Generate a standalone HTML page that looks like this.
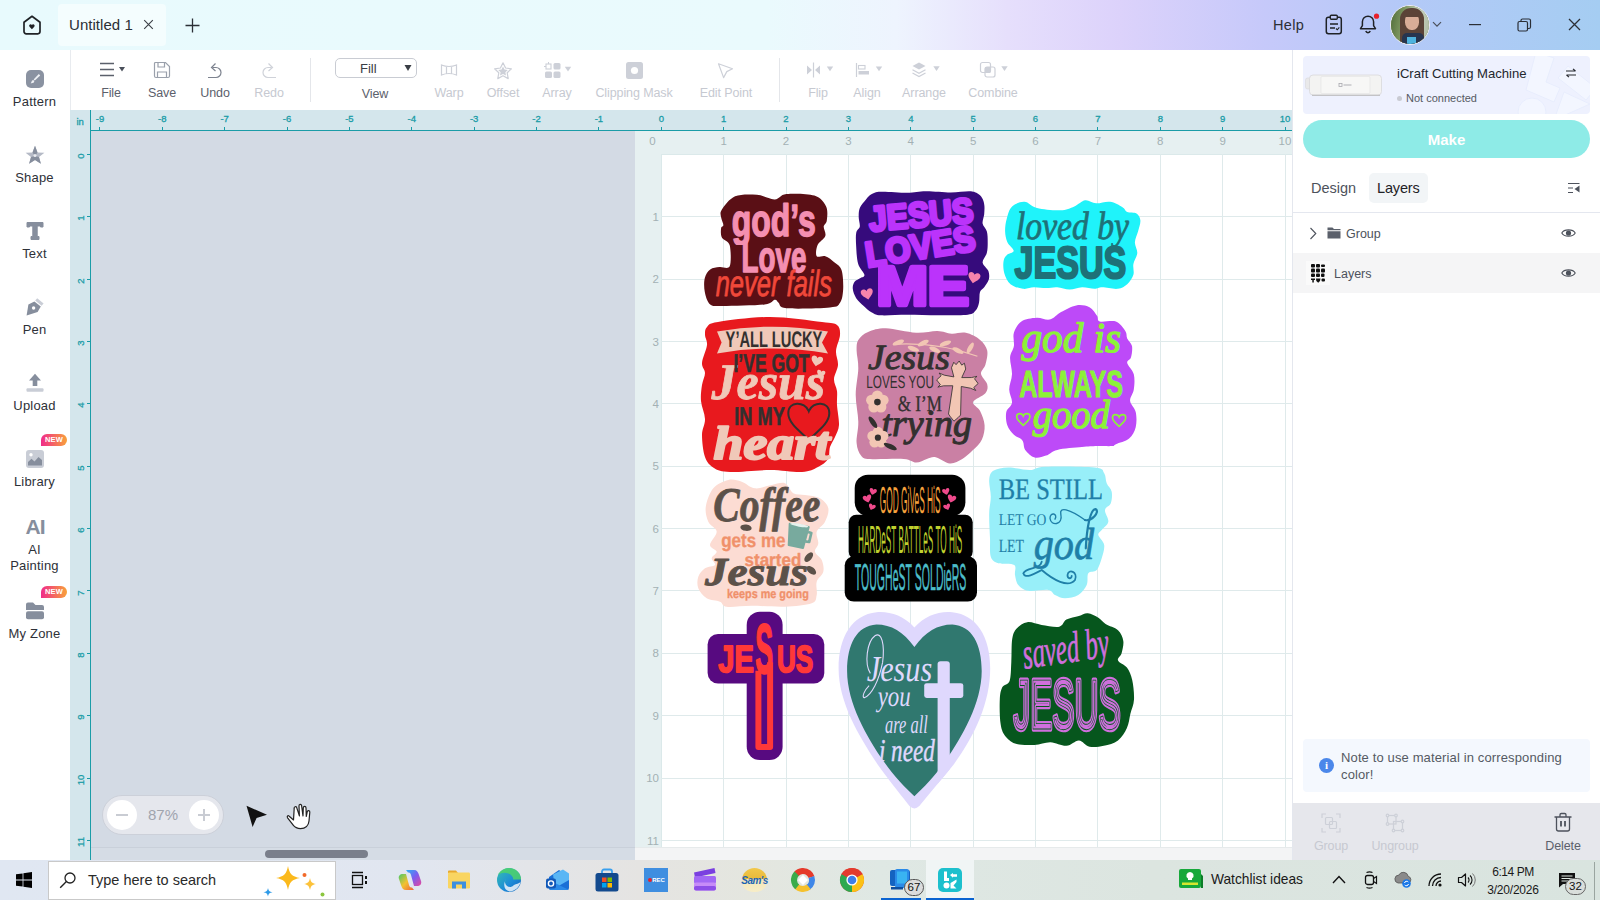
<!DOCTYPE html>
<html lang="en">
<head>
<meta charset="utf-8">
<title>Untitled 1</title>
<style>
*{box-sizing:border-box;margin:0;padding:0}
html,body{width:1600px;height:900px;overflow:hidden;background:#fff;font-family:"Liberation Sans",sans-serif;color:#333}
.abs{position:absolute}
#titlebar{position:absolute;left:0;top:0;width:1600px;height:50px;background:linear-gradient(90deg,#e8fafd 0%,#eafafd 48%,#eef4fe 56%,#e6dffc 63%,#dcd2fb 70%,#c6c9fa 79%,#b3c9f7 88%,#a5cdf2 100%)}
#tab{position:absolute;left:58px;top:4px;width:108px;height:42px;background:#f4fdfe;border-radius:4px}
#tabtxt{position:absolute;left:69px;top:16px;font-size:15px;color:#2b2f36;letter-spacing:.05px;white-space:nowrap}
#sidebar{position:absolute;left:0;top:50px;width:70px;height:810px;background:#fff}
.sb{position:absolute;left:0;width:69px;text-align:center;font-size:13px;color:#2e3138;letter-spacing:.2px;line-height:16px}
#toolbar{position:absolute;left:70px;top:50px;width:1222px;height:60px;background:#fff;border-left:1px solid #e8ebef}
.tl{position:absolute;font-size:12.5px;letter-spacing:-.1px;color:#5b606b;white-space:nowrap;transform:translateX(-50%);top:86px;line-height:15px}
.tl.dis{color:#c6c9d1}
.sep{position:absolute;top:58px;width:1px;height:44px;background:#e4e6ea}
#hruler{position:absolute;left:70px;top:110px;width:1222px;height:21px;background:#d4e6ec;border-bottom:1px solid #1a9ca7}
#vruler{position:absolute;left:70px;top:110px;width:21px;height:750px;background:#d4e6ec;border-right:1px solid #1a9ca7}
.rn{position:absolute;font-size:9.5px;-webkit-text-stroke:.3px #1a9ca7;color:#1a9ca7;top:113px;line-height:12px;transform:translateX(-50%);white-space:nowrap}
.rt{position:absolute;top:127px;width:1px;height:3px;background:#1a9ca7}
.vn{position:absolute;font-size:9.5px;-webkit-text-stroke:.3px #1a9ca7;color:#1a9ca7;left:80.5px;line-height:12px;margin-top:1.5px;transform:translate(-50%,-50%) rotate(-90deg);white-space:nowrap}
.vt{position:absolute;left:87px;width:3px;height:1px;background:#1a9ca7}
#gray{position:absolute;left:91px;top:131px;width:544px;height:729px;background:#d3dae4}
#mat{position:absolute;left:635px;top:131px;width:657px;height:729px;background:#e6f0f1}
#matwhite{position:absolute;left:661px;top:154px;width:631px;height:706px;background:#fff;border-left:1px solid #dbe9ea;border-top:1px solid #dbe9ea}
.mn{position:absolute;font-size:11.5px;color:#a3b1b4;line-height:14px;white-space:nowrap}
#right{position:absolute;left:1292px;top:50px;width:308px;height:810px;background:#fff;border-left:1px solid #e4e7ee}
#taskbar{position:absolute;left:0;top:860px;width:1600px;height:40px;background:linear-gradient(90deg,#e0e7f2 0%,#e1e6f0 26%,#e5e4e2 40%,#e4e6df 47%,#dfe8e4 55%,#dce5e0 72%,#d9e4df 100%)}
.new{width:26px;height:12px;border-radius:7px 7px 7px 0;background:linear-gradient(90deg,#f02b8a,#f8a23a);color:#fff;font-size:7.500px;font-weight:bold;line-height:12px;text-align:center;letter-spacing:.2px}
</style>
</head>
<body>
<div id="titlebar"></div>
<div id="tab"></div>
<svg class="abs" style="left:20px;top:13px" width="24" height="24" viewBox="0 0 24 24"><path d="M4 9.2 L12 3.3 L20 9.2 V18.6 a2.2 2.2 0 0 1 -2.2 2.2 H6.2 a2.2 2.2 0 0 1 -2.2 -2.2 Z" fill="none" stroke="#1f2226" stroke-width="1.7" stroke-linejoin="round"/><path d="M11.900 16.200 L9.500 13.700 a1.500 1.500 0 0 1 2.400 -1.800 a1.500 1.500 0 0 1 2.400 1.800 Z" fill="#1f2226"/></svg>
<div id="tabtxt">Untitled 1</div>
<svg class="abs" style="left:143px;top:19px" width="11" height="11" viewBox="0 0 11 11"><path d="M1.2 1.2 L9.8 9.8 M9.8 1.2 L1.2 9.8" stroke="#3a3e45" stroke-width="1.1" fill="none"/></svg>
<svg class="abs" style="left:185px;top:18px" width="15" height="15" viewBox="0 0 15 15"><path d="M7.5 0.5 V14.5 M0.5 7.5 H14.5" stroke="#2b2f36" stroke-width="1.3" fill="none"/></svg>
<div class="abs" style="left:1273px;top:17px;font-size:14.5px;color:#2b2f36;letter-spacing:.3px">Help</div>
<svg class="abs" style="left:1324px;top:13px" width="20" height="24" viewBox="0 0 20 24"><rect x="2.3" y="4.3" width="15" height="16.4" rx="2.2" fill="none" stroke="#1f2226" stroke-width="1.5"/><rect x="6.3" y="2.3" width="7" height="4" rx="1" fill="#bfc9f9" stroke="#1f2226" stroke-width="1.4"/><path d="M6 11 H14 M6 15 H11" stroke="#1f2226" stroke-width="1.4" fill="none"/><path d="M12 15.5 l1.3 1.3 l2 -2.4" stroke="#1f2226" stroke-width="1.1" fill="none"/></svg>
<svg class="abs" style="left:1356px;top:11px" width="26" height="26" viewBox="0 0 26 26"><path d="M12 5.2 a5.6 5.6 0 0 1 5.6 5.6 v3.8 l1.9 3.1 H4.5 l1.9 -3.1 v-3.8 a5.600 5.600 0 0 1 5.6 -5.6 Z" fill="none" stroke="#1f2226" stroke-width="1.5" stroke-linejoin="round"/><path d="M9.8 20 a2.300 2.300 0 0 0 4.400 0" fill="none" stroke="#1f2226" stroke-width="1.5"/><circle cx="20.500" cy="5.200" r="2.600" fill="#e8202a"/></svg>
<div class="abs" style="left:1390px;top:5px;width:40px;height:40px;border-radius:50%;overflow:hidden;background:#6f8a55;border:1px solid #f1eefb">
 <div class="abs" style="left:0;top:0;width:40px;height:40px;background:linear-gradient(100deg,#4f6b38 0,#7d9660 30%,#c9d3c0 60%,#a9b59c 100%)"></div>
 <div class="abs" style="left:9px;top:2px;width:24px;height:40px;border-radius:11px 11px 4px 4px;background:#5b4337"></div>
 <div class="abs" style="left:14px;top:7px;width:14px;height:17px;border-radius:45%;background:#d8ad97"></div>
 <div class="abs" style="left:12px;top:4px;width:18px;height:7px;border-radius:9px 9px 0 0;background:#5b4337"></div>
 <div class="abs" style="left:11px;top:27px;width:22px;height:13px;border-radius:5px 5px 0 0;background:#27354f"></div>
 <div class="abs" style="left:16px;top:31px;width:9px;height:7px;background:#4fb3de"></div>
</div>
<svg class="abs" style="left:1432px;top:21px" width="10" height="7" viewBox="0 0 10 7"><path d="M1 1.200 L5 5.200 L9 1.200" stroke="#4a4f5a" stroke-width="1.200" fill="none"/></svg>
<svg class="abs" style="left:1468px;top:20px" width="14" height="10" viewBox="0 0 14 10"><path d="M1 4.600 H13" stroke="#2b2f36" stroke-width="1.200"/></svg>
<svg class="abs" style="left:1517px;top:18px" width="15" height="14" viewBox="0 0 15 14"><rect x="1" y="3.500" width="9.500" height="9.500" rx="1.500" fill="none" stroke="#2b2f36" stroke-width="1.200"/><path d="M4 3.500 V2.500 a1.500 1.500 0 0 1 1.500 -1.500 H12 a1.500 1.500 0 0 1 1.500 1.500 V9 a1.500 1.500 0 0 1 -1.500 1.500 H10.500" fill="none" stroke="#2b2f36" stroke-width="1.200"/></svg>
<svg class="abs" style="left:1568px;top:18px" width="13" height="13" viewBox="0 0 13 13"><path d="M1 1 L12 12 M12 1 L1 12" stroke="#2b2f36" stroke-width="1.300" fill="none"/></svg>
<div id="gray"></div><div id="mat"></div><div id="matwhite"></div>
<svg class="abs" style="left:635px;top:131px" width="657" height="729" viewBox="635 131 657 729"><line x1="723.5" y1="154" x2="723.5" y2="860" stroke="#dfeaeb" stroke-width="1"/><line x1="786.5" y1="154" x2="786.5" y2="860" stroke="#dfeaeb" stroke-width="1"/><line x1="848.5" y1="154" x2="848.5" y2="860" stroke="#dfeaeb" stroke-width="1"/><line x1="910.5" y1="154" x2="910.5" y2="860" stroke="#dfeaeb" stroke-width="1"/><line x1="973.5" y1="154" x2="973.5" y2="860" stroke="#dfeaeb" stroke-width="1"/><line x1="1035.5" y1="154" x2="1035.5" y2="860" stroke="#dfeaeb" stroke-width="1"/><line x1="1097.5" y1="154" x2="1097.5" y2="860" stroke="#dfeaeb" stroke-width="1"/><line x1="1160.5" y1="154" x2="1160.5" y2="860" stroke="#dfeaeb" stroke-width="1"/><line x1="1222.5" y1="154" x2="1222.5" y2="860" stroke="#dfeaeb" stroke-width="1"/><line x1="1285.5" y1="154" x2="1285.5" y2="860" stroke="#dfeaeb" stroke-width="1"/><line x1="661" y1="216.5" x2="1292" y2="216.5" stroke="#dfeaeb" stroke-width="1"/><line x1="661" y1="279.5" x2="1292" y2="279.5" stroke="#dfeaeb" stroke-width="1"/><line x1="661" y1="341.5" x2="1292" y2="341.5" stroke="#dfeaeb" stroke-width="1"/><line x1="661" y1="403.5" x2="1292" y2="403.5" stroke="#dfeaeb" stroke-width="1"/><line x1="661" y1="466.5" x2="1292" y2="466.5" stroke="#dfeaeb" stroke-width="1"/><line x1="661" y1="528.5" x2="1292" y2="528.5" stroke="#dfeaeb" stroke-width="1"/><line x1="661" y1="590.5" x2="1292" y2="590.5" stroke="#dfeaeb" stroke-width="1"/><line x1="661" y1="653.5" x2="1292" y2="653.5" stroke="#dfeaeb" stroke-width="1"/><line x1="661" y1="715.5" x2="1292" y2="715.5" stroke="#dfeaeb" stroke-width="1"/><line x1="661" y1="778.5" x2="1292" y2="778.5" stroke="#dfeaeb" stroke-width="1"/><line x1="661" y1="840.5" x2="1292" y2="840.5" stroke="#dfeaeb" stroke-width="1"/></svg>
<div class="mn" style="left:649.3px;top:134px">0</div>
<div class="mn" style="left:723.7px;top:134px;transform:translateX(-50%)">1</div>
<div class="mn" style="left:786.0px;top:134px;transform:translateX(-50%)">2</div>
<div class="mn" style="left:848.4px;top:134px;transform:translateX(-50%)">3</div>
<div class="mn" style="left:910.8px;top:134px;transform:translateX(-50%)">4</div>
<div class="mn" style="left:973.1px;top:134px;transform:translateX(-50%)">5</div>
<div class="mn" style="left:1035.5px;top:134px;transform:translateX(-50%)">6</div>
<div class="mn" style="left:1097.9px;top:134px;transform:translateX(-50%)">7</div>
<div class="mn" style="left:1160.3px;top:134px;transform:translateX(-50%)">8</div>
<div class="mn" style="left:1222.6px;top:134px;transform:translateX(-50%)">9</div>
<div class="mn" style="left:1285.0px;top:134px;transform:translateX(-50%)">10</div>
<div class="mn" style="left:645px;top:209.8px;width:14px;text-align:right">1</div>
<div class="mn" style="left:645px;top:272.1px;width:14px;text-align:right">2</div>
<div class="mn" style="left:645px;top:334.5px;width:14px;text-align:right">3</div>
<div class="mn" style="left:645px;top:396.9px;width:14px;text-align:right">4</div>
<div class="mn" style="left:645px;top:459.2px;width:14px;text-align:right">5</div>
<div class="mn" style="left:645px;top:521.6px;width:14px;text-align:right">6</div>
<div class="mn" style="left:645px;top:584.0px;width:14px;text-align:right">7</div>
<div class="mn" style="left:645px;top:646.4px;width:14px;text-align:right">8</div>
<div class="mn" style="left:645px;top:708.7px;width:14px;text-align:right">9</div>
<div class="mn" style="left:645px;top:771.1px;width:14px;text-align:right">10</div>
<div class="mn" style="left:645px;top:833.5px;width:14px;text-align:right">11</div>
<div id="hruler"></div><div id="vruler"></div>
<div class="abs" style="left:76.5px;top:116px;font-size:9.5px;-webkit-text-stroke:.3px #1a9ca7;color:#1a9ca7;line-height:12px">in</div>
<div class="abs" style="left:90px;top:112px;width:1px;height:20px;background:#1a9ca7"></div>
<div class="rn" style="left:100.0px">-9</div><div class="rt" style="left:99px"></div>
<div class="rn" style="left:162.3px">-8</div><div class="rt" style="left:162px"></div>
<div class="rn" style="left:224.7px">-7</div><div class="rt" style="left:224px"></div>
<div class="rn" style="left:287.1px">-6</div><div class="rt" style="left:287px"></div>
<div class="rn" style="left:349.4px">-5</div><div class="rt" style="left:349px"></div>
<div class="rn" style="left:411.8px">-4</div><div class="rt" style="left:411px"></div>
<div class="rn" style="left:474.2px">-3</div><div class="rt" style="left:474px"></div>
<div class="rn" style="left:536.6px">-2</div><div class="rt" style="left:536px"></div>
<div class="rn" style="left:598.9px">-1</div><div class="rt" style="left:598px"></div>
<div class="rn" style="left:661.3px">0</div><div class="rt" style="left:661px"></div>
<div class="rn" style="left:723.7px">1</div><div class="rt" style="left:723px"></div>
<div class="rn" style="left:786.0px">2</div><div class="rt" style="left:786px"></div>
<div class="rn" style="left:848.4px">3</div><div class="rt" style="left:848px"></div>
<div class="rn" style="left:910.8px">4</div><div class="rt" style="left:910px"></div>
<div class="rn" style="left:973.1px">5</div><div class="rt" style="left:973px"></div>
<div class="rn" style="left:1035.5px">6</div><div class="rt" style="left:1035px"></div>
<div class="rn" style="left:1097.9px">7</div><div class="rt" style="left:1097px"></div>
<div class="rn" style="left:1160.3px">8</div><div class="rt" style="left:1160px"></div>
<div class="rn" style="left:1222.6px">9</div><div class="rt" style="left:1222px"></div>
<div class="rn" style="left:1285.0px">10</div><div class="rt" style="left:1285px"></div>
<div class="vn" style="top:154.4px">0</div><div class="vt" style="top:154px"></div>
<div class="vn" style="top:216.8px">1</div><div class="vt" style="top:216px"></div>
<div class="vn" style="top:279.1px">2</div><div class="vt" style="top:279px"></div>
<div class="vn" style="top:341.5px">3</div><div class="vt" style="top:341px"></div>
<div class="vn" style="top:403.9px">4</div><div class="vt" style="top:403px"></div>
<div class="vn" style="top:466.2px">5</div><div class="vt" style="top:466px"></div>
<div class="vn" style="top:528.6px">6</div><div class="vt" style="top:528px"></div>
<div class="vn" style="top:591.0px">7</div><div class="vt" style="top:590px"></div>
<div class="vn" style="top:653.4px">8</div><div class="vt" style="top:653px"></div>
<div class="vn" style="top:715.7px">9</div><div class="vt" style="top:715px"></div>
<div class="vn" style="top:778.1px">10</div><div class="vt" style="top:778px"></div>
<div class="vn" style="top:840.5px">11</div><div class="vt" style="top:840px"></div>
<div class="abs" style="left:91px;top:847px;width:544px;height:13px;background:#d5dce5;border-top:1px solid #c9d0da"></div>
<div class="abs" style="left:635px;top:847px;width:657px;height:13px;background:#f3f4f5;border-top:1px solid #e6eaeb"></div>
<div class="abs" style="left:265px;top:850px;width:103px;height:8px;border-radius:4px;background:#7a7f8b"></div>
<div class="abs" style="left:102px;top:795px;width:122px;height:40px;border-radius:20px;background:#e5e7ed;border:1px solid #ccd0d9"></div>
<div class="abs" style="left:107px;top:800px;width:30px;height:30px;border-radius:50%;background:#fff"></div>
<div class="abs" style="left:189px;top:800px;width:30px;height:30px;border-radius:50%;background:#fff"></div>
<div class="abs" style="left:116px;top:814px;width:12px;height:1.500px;background:#c9ccd3"></div>
<div class="abs" style="left:198px;top:814px;width:12px;height:1.500px;background:#c9ccd3"></div>
<div class="abs" style="left:203px;top:809px;width:1.500px;height:12px;background:#c9ccd3"></div>
<div class="abs" style="left:133px;top:806px;width:60px;text-align:center;font-size:15px;color:#a0a4ad;line-height:18px">87%</div>
<svg class="abs" style="left:244px;top:803px" width="26" height="26" viewBox="0 0 26 26"><path d="M2.500 2.800 L23 11.800 L12.600 15 L8.600 24 Z" fill="#111"/></svg>
<svg class="abs" style="left:284px;top:801px" width="30" height="30" viewBox="0 0 30 30"><path d="M9.500 19 L5.200 15.200 C4 14 2.600 15.400 3.600 16.800 L9.200 24.200 C11 26.600 13.500 27.600 16.500 27.600 C21.500 27.600 24.600 24.400 25 20 L25.800 11.200 C26 9.400 23.600 9 23.200 10.800 L22.300 15.500 L22 6.800 C21.900 5 19.400 5 19.300 6.800 L19 14.800 L17.600 4.600 C17.300 2.800 14.900 3.100 15 4.900 L15.400 14.900 L12.700 6.600 C12.100 4.900 9.800 5.700 10.200 7.400 Z" fill="#fff" stroke="#222" stroke-width="1.200" stroke-linejoin="round"/></svg>
<div id="sidebar"></div>
<svg class="abs" style="left:25px;top:69px" width="20" height="20" viewBox="0 0 20 20"><rect x="1" y="1" width="18" height="18" rx="5" fill="#8a92a1"/><path d="M13.800 5 L15.200 6.400 L9.800 11.600 L8.600 10.400 Z" fill="#eef0f4"/><path d="M8.200 11 L9.300 12.100 C9.300 13.800 7.600 14.600 5.600 14.200 C6.800 13.400 6.200 11.400 8.200 11 Z" fill="#eef0f4"/></svg>
<div class="sb" style="top:94px">Pattern</div>
<svg class="abs" style="left:24px;top:144px" width="22" height="22" viewBox="0 0 22 22"><path d="M11 1.800 L13.500 8.400 L20.400 8.700 L15 13 L16.900 19.800 L11 16 L5.100 19.800 L7 13 L1.600 8.700 L8.500 8.400 Z" fill="#b5bac6"/><path d="M11 1.800 L13.500 8.400 L11 12 L8.500 8.400 Z M15 13 L16.900 19.800 L11 16 L11 12 Z M7 13 L11 12 L11 16 L5.100 19.800 Z" fill="#868e9d"/><circle cx="11" cy="11.600" r="1.500" fill="#e9ebf0"/></svg>
<div class="sb" style="top:170px">Shape</div>
<svg class="abs" style="left:25px;top:221px" width="20" height="20" viewBox="0 0 20 20"><path d="M2 1.500 H18 V6 H15.500 V5 H12.200 V15.500 H14 V18.500 H6 V15.500 H7.800 V5 H4.500 V6 H2 Z" fill="#868e9d" stroke="#868e9d" stroke-width="1" stroke-linejoin="round"/></svg>
<div class="sb" style="top:246px">Text</div>
<svg class="abs" style="left:24px;top:296px" width="22" height="22" viewBox="0 0 22 22"><path d="M13.200 2.200 L19.600 7.400 L17.600 9.800 L11.200 4.600 Z" fill="#c9cdd6"/><path d="M10.400 5.400 L16.800 10.600 L13.600 16 L2.600 19.400 L4.400 8.600 Z" fill="#868e9d"/><circle cx="9.600" cy="12" r="1.700" fill="#fff"/></svg>
<div class="sb" style="top:322px">Pen</div>
<svg class="abs" style="left:25px;top:372px" width="20" height="22" viewBox="0 0 20 22"><path d="M10 1.800 L16 8.400 H12.300 V14 H7.700 V8.400 H4 Z" fill="#868e9d"/><rect x="1.500" y="16.200" width="17" height="3.600" rx="1" fill="#c9cdd6"/></svg>
<div class="sb" style="top:398px">Upload</div>
<svg class="abs" style="left:25px;top:449px" width="20" height="20" viewBox="0 0 20 20"><rect x="1" y="1" width="18" height="18" rx="3" fill="#c9cdd6"/><path d="M3 16.500 V13 L6.500 9.800 L9.500 12.500 L13.500 8 L17 11 V16.500 Z" fill="#868e9d"/><circle cx="6" cy="5.800" r="1.700" fill="#fff"/></svg>
<div class="sb" style="top:474px">Library</div>
<div class="abs" style="left:24px;top:514px;width:22px;text-align:center;font-size:21px;font-weight:bold;color:#868e9d;line-height:26px;letter-spacing:-1px">AI</div>
<div class="sb" style="top:542px">AI<br>Painting</div>
<svg class="abs" style="left:25px;top:601px" width="20" height="20" viewBox="0 0 20 20"><path d="M1 3.500 a2 2 0 0 1 2 -2 H8 L10.500 4 H17 a2 2 0 0 1 2 2 V9 H1 Z" fill="#868e9d"/><rect x="1" y="10.200" width="18" height="8" rx="2" fill="#868e9d"/></svg>
<div class="sb" style="top:626px">My Zone</div>
<div class="abs new" style="left:41px;top:434px">NEW</div>
<div class="abs new" style="left:41px;top:586px">NEW</div>
<div id="toolbar"></div>
<!-- File -->
<svg class="abs" style="left:99px;top:61px" width="30" height="16" viewBox="0 0 30 16"><path d="M1 2.500 H15 M1 8.500 H15 M1 14.500 H15" stroke="#5b606b" stroke-width="1.300" fill="none"/><path d="M20 6 H26 L23 10.500 Z" fill="#4a4f5a"/></svg>
<div class="tl" style="left:111px">File</div>
<!-- Save -->
<svg class="abs" style="left:153px;top:61px" width="18" height="18" viewBox="0 0 18 18"><path d="M2.500 1.500 H12.500 L16.500 5.500 V15 a1.500 1.500 0 0 1 -1.500 1.500 H3 a1.500 1.500 0 0 1 -1.500 -1.500 V2.500 a1 1 0 0 1 1 -1 Z" fill="none" stroke="#9aa0ab" stroke-width="1.200"/><path d="M5 1.500 V6 H11.500 V1.500 M4.500 16.500 V11 H13.500 V16.500" fill="none" stroke="#9aa0ab" stroke-width="1.200"/></svg>
<div class="tl" style="left:162px">Save</div>
<!-- Undo -->
<svg class="abs" style="left:206px;top:61px" width="20" height="18" viewBox="0 0 20 18"><path d="M2 16.500 H10 a5 5 0 0 0 0 -10 H6.500" fill="none" stroke="#7d838f" stroke-width="1.200"/><path d="M9.500 2.500 L5.500 6.500 L9.500 10" fill="none" stroke="#7d838f" stroke-width="1.200"/></svg>
<div class="tl" style="left:215px">Undo</div>
<!-- Redo -->
<svg class="abs" style="left:258px;top:61px" width="20" height="18" viewBox="0 0 20 18"><path d="M18 16.500 H10 a5 5 0 0 1 0 -10 H13.500" fill="none" stroke="#cfd2d9" stroke-width="1.200"/><path d="M10.500 2.500 L14.500 6.500 L10.500 10" fill="none" stroke="#cfd2d9" stroke-width="1.200"/></svg>
<div class="tl dis" style="left:269px">Redo</div>
<div class="sep" style="left:310px"></div>
<!-- View select -->
<div class="abs" style="left:335px;top:58px;width:82px;height:20px;border:1px solid #c9ccd3;border-radius:5px;background:#fff"></div>
<div class="abs" style="left:360px;top:61px;font-size:13px;color:#3a3e45;line-height:15px">Fill</div>
<svg class="abs" style="left:403px;top:64px" width="10" height="8" viewBox="0 0 10 8"><path d="M1.500 1 H8.500 L5 7 Z" fill="#3a3e45"/></svg>
<div class="tl" style="left:375px;top:87px">View</div>
<!-- Warp -->
<svg class="abs" style="left:440px;top:63px" width="18" height="14" viewBox="0 0 18 14"><path d="M1.500 2 C6 3.800 12 3.800 16.500 2 V12 C12 10.200 6 10.200 1.500 12 Z M6.500 3.200 V10.800 M11.500 3.200 V10.800" fill="none" stroke="#cdd0d8" stroke-width="1.200"/></svg>
<div class="tl dis" style="left:449px">Warp</div>
<!-- Offset -->
<svg class="abs" style="left:493px;top:61px" width="20" height="20" viewBox="0 0 20 20"><path d="M10 1.800 L12.600 7 L18.400 7.800 L14.200 11.800 L15.200 17.600 L10 14.800 L4.800 17.600 L5.800 11.800 L1.600 7.800 L7.400 7 Z" fill="none" stroke="#cdd0d8" stroke-width="1.200" stroke-linejoin="round"/><path d="M10 5.600 L11.500 8.600 L14.800 9 L12.400 11.300 L13 14.600 L10 13 L7 14.600 L7.600 11.300 L5.200 9 L8.500 8.600 Z" fill="#cdd0d8"/></svg>
<div class="tl dis" style="left:503px">Offset</div>
<!-- Array -->
<svg class="abs" style="left:544px;top:62px" width="30" height="17" viewBox="0 0 30 17"><rect x="2" y="2" width="5" height="5" fill="none" stroke="#cdd0d8" stroke-width="1.100"/><path d="M4.500 0 V2 M0 4.500 H2" stroke="#cdd0d8" stroke-width="1"/><rect x="9.500" y="1" width="7" height="6.500" rx="1.500" fill="#cdd0d8"/><rect x="1" y="9.500" width="7" height="6.500" rx="1.500" fill="#cdd0d8"/><rect x="9.500" y="9.500" width="7" height="6.500" rx="1.500" fill="#cdd0d8"/><path d="M20.800 4.800 H27.200 L24 9.600 Z" fill="#cdd0d8"/></svg>
<div class="tl dis" style="left:557px">Array</div>
<!-- Clipping Mask -->
<svg class="abs" style="left:625px;top:61px" width="19" height="19" viewBox="0 0 19 19"><rect x="1" y="1" width="17" height="17" rx="2.500" fill="#cdd0d8"/><circle cx="9.500" cy="9.500" r="3.600" fill="#fff"/></svg>
<div class="tl dis" style="left:634px">Clipping Mask</div>
<!-- Edit point -->
<svg class="abs" style="left:716px;top:62px" width="19" height="18" viewBox="0 0 19 18"><path d="M2.500 1.800 L16.500 6.800 L10.800 9.600 L7.600 15.600 Z" fill="none" stroke="#cdd0d8" stroke-width="1.200" stroke-linejoin="round"/></svg>
<div class="tl dis" style="left:726px">Edit Point</div>
<div class="sep" style="left:779px"></div>
<!-- Flip -->
<svg class="abs" style="left:806px;top:62px" width="30" height="16" viewBox="0 0 30 16"><path d="M7.500 0.500 V15.500" stroke="#cdd0d8" stroke-width="1.200"/><path d="M1 3.500 L6 8 L1 12.500 Z M14 3.500 L9 8 L14 12.500 Z" fill="#cdd0d8"/><path d="M20.800 4.400 H27.200 L24 9.200 Z" fill="#cdd0d8"/></svg>
<div class="tl dis" style="left:818px">Flip</div>
<!-- Align -->
<svg class="abs" style="left:855px;top:62px" width="30" height="16" viewBox="0 0 30 16"><path d="M1.500 1 V15" stroke="#cdd0d8" stroke-width="1.200"/><rect x="3.500" y="3.500" width="6.500" height="3.500" fill="none" stroke="#cdd0d8" stroke-width="1.100"/><rect x="3.500" y="9" width="10.500" height="3.500" fill="#cdd0d8"/><path d="M20.800 4.400 H27.200 L24 9.200 Z" fill="#cdd0d8"/></svg>
<div class="tl dis" style="left:867px">Align</div>
<!-- Arrange -->
<svg class="abs" style="left:911px;top:61px" width="32" height="18" viewBox="0 0 32 18"><path d="M8 1.500 L14.500 5 L8 8.500 L1.500 5 Z" fill="#cdd0d8"/><path d="M1.500 8.700 L8 12.200 L14.500 8.700 M1.500 12 L8 15.500 L14.500 12" fill="none" stroke="#cdd0d8" stroke-width="1.200"/><path d="M22.300 5.300 H28.700 L25.500 10.100 Z" fill="#cdd0d8"/></svg>
<div class="tl dis" style="left:924px">Arrange</div>
<!-- Combine -->
<svg class="abs" style="left:979px;top:61px" width="32" height="18" viewBox="0 0 32 18"><rect x="1.500" y="1.500" width="10" height="10" rx="2" fill="none" stroke="#cdd0d8" stroke-width="1.200"/><rect x="6" y="6" width="10" height="10" rx="2" fill="none" stroke="#cdd0d8" stroke-width="1.200"/><rect x="6" y="6" width="5.500" height="5.500" fill="#cdd0d8"/><path d="M22.300 5.300 H28.700 L25.500 10.100 Z" fill="#cdd0d8"/></svg>
<div class="tl dis" style="left:993px">Combine</div>
<div id="right"></div>
<div class="abs" style="left:1303px;top:56px;width:287px;height:58px;border-radius:4px;background:#eef1fe;overflow:hidden">
 <svg class="abs" style="left:195px;top:0" width="92" height="58" viewBox="0 0 92 58"><g fill="#f3f6ff" stroke="#e8edfd" stroke-width="1"><path d="M38 -4 L56 2 L48 26 L62 32 L56 46 L28 34 Z"/><path d="M70 10 L98 32 L88 44 L60 22 Z"/><circle cx="34" cy="56" r="14"/><path d="M66 36 L92 48 L56 64 Z"/></g></svg>
</div>
<svg class="abs" style="left:1304px;top:73px" width="80" height="26" viewBox="0 0 80 26"><rect x="1.500" y="5" width="6" height="11" rx="2" fill="#e9e9ea" stroke="#d9d9db" stroke-width=".6"/><rect x="5.500" y="2" width="72" height="20" rx="3.500" fill="#f3f3f2" stroke="#d8d8da" stroke-width=".8"/><rect x="17" y="3.500" width="49" height="17" rx="1" fill="#f7f7f6" stroke="#e2e2e3" stroke-width=".6"/><path d="M8 22.300 H76" stroke="#c3c3c6" stroke-width="1.200"/><rect x="35" y="10.500" width="3" height="3" fill="none" stroke="#a9a9ae" stroke-width=".8"/><rect x="39.500" y="11.300" width="8" height="1.400" fill="#c4c4c8"/></svg>
<div class="abs" style="left:1397px;top:66px;font-size:13.1px;color:#24272d;line-height:16px;letter-spacing:0;white-space:nowrap">iCraft Cutting Machine</div>
<div class="abs" style="left:1397px;top:96px;width:5px;height:5px;border-radius:50%;background:#c9cbd3"></div>
<div class="abs" style="left:1406px;top:91px;font-size:11px;color:#555a63;line-height:14px;letter-spacing:0;white-space:nowrap">Not connected</div>
<svg class="abs" style="left:1565px;top:68px" width="12" height="10" viewBox="0 0 12 10"><path d="M1 3 H10.500 M8 0.800 L10.500 3 M11 7 H1.500 M4 9.200 L1.500 7" fill="none" stroke="#24272d" stroke-width="1.100"/></svg>
<div class="abs" style="left:1303px;top:120px;width:287px;height:38px;border-radius:19px;background:#8eebe7;color:#fff;font-weight:bold;font-size:15px;text-align:center;line-height:39px">Make</div>
<div class="abs" style="left:1311px;top:179px;font-size:14.5px;color:#4d525c;line-height:18px;letter-spacing:0">Design</div>
<div class="abs" style="left:1369px;top:173px;width:59px;height:30px;border-radius:5px;background:#f2f5f7"></div>
<div class="abs" style="left:1377px;top:179px;font-size:14.5px;color:#1f2226;line-height:18px;letter-spacing:-.15px">Layers</div>
<svg class="abs" style="left:1567px;top:182px" width="14" height="12" viewBox="0 0 14 12"><path d="M1 1.500 H12.500 M1 6 H6 M1 10.500 H6" stroke="#4d525c" stroke-width="1.100" fill="none"/><path d="M12.500 3.500 V10.500 L7.500 7 Z" fill="#4d525c"/></svg>
<div class="abs" style="left:1293px;top:212px;width:307px;height:1px;background:#e4e7ef"></div>
<svg class="abs" style="left:1309px;top:227px" width="8" height="13" viewBox="0 0 8 13"><path d="M1.500 1 L6.800 6.500 L1.500 12" fill="none" stroke="#4d525c" stroke-width="1.100"/></svg>
<svg class="abs" style="left:1327px;top:227px" width="14" height="12" viewBox="0 0 14 12"><path d="M0.500 0.500 H5.500 L7 2 H13.500 V3.300 H0.500 Z M0.500 4.300 H13.500 V11.500 H0.500 Z" fill="#5b606b"/></svg>
<div class="abs" style="left:1346px;top:227px;font-size:12.5px;color:#4d525c;line-height:15px;letter-spacing:0">Group</div>
<svg class="abs eye" style="left:1561px;top:227px" width="15" height="12" viewBox="0 0 15 12"><path d="M0.800 6 C3 1.800 12 1.800 14.200 6 C12 10.200 3 10.200 0.800 6 Z" fill="none" stroke="#4d525c" stroke-width="1.100"/><circle cx="7.500" cy="6" r="2.600" fill="#4d525c"/></svg>
<div class="abs" style="left:1293px;top:253px;width:307px;height:40px;background:#f5f5f6"></div>
<svg class="abs" style="left:1306px;top:261px" width="24" height="24" viewBox="0 0 24 24"><rect width="24" height="24" fill="#fafafa"/><g fill="#111"><rect x="5" y="3" width="4" height="3.500" rx="1"/><rect x="10" y="3" width="4" height="3.500" rx="1"/><rect x="15" y="3.500" width="4" height="2.500" rx="1"/><rect x="5" y="7.500" width="4" height="4" rx="1"/><rect x="10" y="7.500" width="4" height="4" rx="1"/><rect x="15" y="7.500" width="4" height="4" rx="1"/><rect x="5" y="12.500" width="4" height="3.500" rx="1"/><rect x="10" y="12.500" width="4" height="3.500" rx="1"/><rect x="15" y="12.500" width="3.500" height="3.500" rx="1"/><path d="M5 17.500 H9 V19 H7.800 V21.500 H6.300 V19 H5 Z M10 17.500 H14.500 L14 20 L12.200 21.800 L10.300 20 Z"/><rect x="15.500" y="17.500" width="3.500" height="3" rx="1"/></g></svg>
<div class="abs" style="left:1334px;top:267px;font-size:12.5px;color:#4d525c;line-height:15px;letter-spacing:0">Layers</div>
<svg class="abs eye" style="left:1561px;top:267px" width="15" height="12" viewBox="0 0 15 12"><path d="M0.800 6 C3 1.800 12 1.800 14.200 6 C12 10.200 3 10.200 0.800 6 Z" fill="none" stroke="#4d525c" stroke-width="1.100"/><circle cx="7.500" cy="6" r="2.600" fill="#4d525c"/></svg>
<div class="abs" style="left:1303px;top:739px;width:287px;height:53px;border-radius:4px;background:#f4f8fe"></div>
<div class="abs" style="left:1319px;top:758px;width:15px;height:15px;border-radius:50%;background:#4b87ea;color:#fff;font-size:11px;font-weight:bold;text-align:center;line-height:15px;font-family:'Liberation Serif',serif">i</div>
<div class="abs" style="left:1341px;top:749px;width:240px;font-size:13px;color:#555a63;line-height:17px;letter-spacing:.13px">Note to use material in corresponding color!</div>
<div class="abs" style="left:1293px;top:803px;width:307px;height:57px;background:#e6e7ec"></div>
<svg class="abs" style="left:1321px;top:813px" width="20" height="20" viewBox="0 0 20 20"><g fill="none" stroke="#cdd0d8" stroke-width="1.200"><path d="M1 5 V1 H5 M15 1 H19 V5 M19 15 V19 H15 M5 19 H1 V15"/><rect x="4.500" y="4.500" width="7" height="7" rx="1"/><rect x="8.500" y="8.500" width="7" height="7" rx="1"/></g></svg>
<div class="tl dis" style="left:1331px;top:839px">Group</div>
<svg class="abs" style="left:1385px;top:813px" width="20" height="20" viewBox="0 0 20 20"><g fill="none" stroke="#cdd0d8" stroke-width="1.200"><rect x="2.500" y="2.500" width="8.500" height="8.500"/><rect x="8.500" y="8.500" width="9" height="9"/><circle cx="2.500" cy="2.500" r="1.300" fill="#e6e7ec"/><circle cx="11" cy="2.500" r="1.300" fill="#e6e7ec"/><circle cx="2.500" cy="11" r="1.300" fill="#e6e7ec"/><circle cx="17.500" cy="8.500" r="1.300" fill="#e6e7ec"/><circle cx="8.500" cy="17.500" r="1.300" fill="#e6e7ec"/><circle cx="17.500" cy="17.500" r="1.300" fill="#e6e7ec"/></g></svg>
<div class="tl dis" style="left:1395px;top:839px">Ungroup</div>
<svg class="abs" style="left:1553px;top:812px" width="20" height="21" viewBox="0 0 20 21"><g fill="none" stroke="#4d525c" stroke-width="1.300"><path d="M1.500 5 H18.500 M7 4.500 V2.800 a1.300 1.300 0 0 1 1.300 -1.300 H11.700 a1.300 1.300 0 0 1 1.300 1.300 V4.500 M3.500 5 V17 a2 2 0 0 0 2 2 H14.500 a2 2 0 0 0 2 -2 V5"/></g><path d="M8 9 V14.500 M12 9 V14.500" stroke="#4d525c" stroke-width="1.800"/></svg>
<div class="tl" style="left:1563px;top:839px">Delete</div>
<div id="taskbar"></div>
<svg class="abs" style="left:16px;top:872px" width="16" height="16" viewBox="0 0 16 16"><path d="M0 2.300 L6.600 1.400 V7.600 H0 Z M7.400 1.300 L16 0 V7.600 H7.400 Z M0 8.400 H6.600 V14.600 L0 13.700 Z M7.400 8.400 H16 V16 L7.400 14.700 Z" fill="#000"/></svg>
<div class="abs" style="left:48px;top:861px;width:288px;height:39px;background:#fff;border:1px solid #c9c9c9"></div>
<svg class="abs" style="left:59px;top:871px" width="18" height="18" viewBox="0 0 18 18"><circle cx="11" cy="7" r="5" fill="none" stroke="#222" stroke-width="1.300"/><path d="M7.400 10.600 L1.200 16.800" stroke="#222" stroke-width="1.400"/></svg>
<div class="abs" style="left:88px;top:871px;font-size:14.5px;color:#2a2a2a;line-height:18px;white-space:nowrap">Type here to search</div>
<svg class="abs" style="left:262px;top:864px" width="66" height="34" viewBox="0 0 66 34"><path d="M26 2 C27.500 10 30 12.500 38 14 C30 15.500 27.500 18 26 26 C24.500 18 22 15.500 14 14 C22 12.500 24.500 10 26 2 Z" fill="#fbb91c"/><path d="M48 14 C48.800 18 50 19.200 54 20 C50 20.800 48.800 22 48 26 C47.200 22 46 20.800 42 20 C46 19.200 47.200 18 48 14 Z" fill="#fcc23a"/><path d="M6 24 C6.600 27 7.500 27.600 10.500 28.200 C7.500 28.800 6.600 29.600 6 32.500 C5.400 29.600 4.500 28.800 1.500 28.200 C4.500 27.600 5.400 27 6 24 Z" fill="#2f9be8"/><circle cx="42.500" cy="11" r="2" fill="#f26a2a"/><circle cx="60.500" cy="30.500" r="2" fill="#8cc63f"/></svg>
<svg class="abs" style="left:350px;top:871px" width="18" height="18" viewBox="0 0 18 18"><rect x="2.500" y="4.500" width="10" height="9" fill="none" stroke="#111" stroke-width="1.300"/><path d="M2 1.500 H13 M2 16.500 H13" stroke="#111" stroke-width="1.300"/><rect x="15" y="5" width="2" height="3" fill="#111"/><rect x="15" y="10" width="2" height="3" fill="#111"/></svg>
<!-- copilot -->
<svg class="abs" style="left:397px;top:867px" width="26" height="26" viewBox="0 0 26 26"><defs><linearGradient id="cp1" x1="0" y1="0" x2="1" y2="1"><stop offset="0" stop-color="#2bb5f5"/><stop offset=".5" stop-color="#7b5cf0"/><stop offset="1" stop-color="#e8489a"/></linearGradient><linearGradient id="cp2" x1="0" y1="0" x2="1" y2="1"><stop offset="0" stop-color="#45c96a"/><stop offset=".5" stop-color="#f2c230"/><stop offset="1" stop-color="#f0613a"/></linearGradient></defs><path d="M9 3 H17 C20 3 21 5 22 8 L24 14 C25 17 23 19 20 19 H17 L14 8 C13.500 6 12.500 5.500 11 5.500 Z" fill="url(#cp1)"/><path d="M17 23 H9 C6 23 5 21 4 18 L2 12 C1 9 3 7 6 7 H9 L12 18 C12.500 20 13.500 20.500 15 20.500 Z" fill="url(#cp2)"/></svg>
<!-- explorer -->
<svg class="abs" style="left:447px;top:869px" width="24" height="22" viewBox="0 0 24 22"><path d="M1 2.500 a1 1 0 0 1 1 -1 H9 L11 4 H1 Z" fill="#e8a92e"/><rect x="1" y="3.500" width="22" height="16" rx="1.200" fill="#f9d562"/><path d="M5 19.500 V12.500 H19 V19.500 H15 V15.500 H9 V19.500 Z" fill="#3c8fe0"/></svg>
<!-- edge -->
<svg class="abs" style="left:496px;top:867px" width="26" height="26" viewBox="0 0 26 26"><defs><linearGradient id="eg" x1="0" y1="0" x2="1" y2="1"><stop offset="0" stop-color="#35c1b0"/><stop offset=".6" stop-color="#1d8ad8"/><stop offset="1" stop-color="#1463b8"/></linearGradient></defs><circle cx="13" cy="13" r="12" fill="url(#eg)"/><path d="M25 11 C24 5 19 1 13 1 C8 1 4 4 2 8 C5 5.500 9 5 12.500 6.500 C16 8 17.500 10.500 17 12.500 H25 Z" fill="#4fd36a" opacity=".85"/><path d="M10 12 a5 5 0 0 0 8 6 c2 -1 5 -1.500 6.500 -3 c-1 5 -5 9 -11 9.500 c-5 -1 -7 -6 -3.500 -12.500 Z" fill="#e4eef8" opacity=".9"/></svg>
<!-- outlook -->
<svg class="abs" style="left:545px;top:868px" width="26" height="24" viewBox="0 0 26 24"><path d="M4 9 L14 2 L24 9 V20 a2 2 0 0 1 -2 2 H6 a2 2 0 0 1 -2 -2 Z" fill="#1a6fd6"/><path d="M8 6.500 L18 1.500 L24 5.500 V12 L10 20 Z" fill="#5ab6f5"/><path d="M4 12 L24 22 H6 a2 2 0 0 1 -2 -2 Z" fill="#2b8ae8"/><rect x="1" y="10.500" width="10" height="10" rx="2" fill="#1158b8"/><circle cx="6" cy="15.500" r="2.600" fill="none" stroke="#fff" stroke-width="1.400"/></svg>
<!-- store -->
<svg class="abs" style="left:594px;top:867px" width="26" height="26" viewBox="0 0 26 26"><path d="M8 7 V4.500 a2 2 0 0 1 2 -2 H16 a2 2 0 0 1 2 2 V7" fill="none" stroke="#3aa0ee" stroke-width="1.800"/><rect x="1.500" y="6" width="23" height="18.500" rx="2.500" fill="#134a8e"/><rect x="8" y="10.500" width="4.500" height="4.500" fill="#f25022"/><rect x="13.500" y="10.500" width="4.500" height="4.500" fill="#7fba00"/><rect x="8" y="16" width="4.500" height="4.500" fill="#00a4ef"/><rect x="13.500" y="16" width="4.500" height="4.500" fill="#ffb900"/></svg>
<!-- rec -->
<div class="abs" style="left:644px;top:868px;width:24px;height:24px;background:#3f8ee0"></div>
<div class="abs" style="left:644px;top:876px;width:24px;text-align:center;font-size:6px;font-weight:bold;color:#fff;line-height:8px;letter-spacing:0;padding-left:5px">REC</div>
<div class="abs" style="left:648px;top:878px;width:4px;height:4px;border-radius:50%;background:#e8202a"></div>
<!-- clipchamp -->
<svg class="abs" style="left:693px;top:867px" width="24" height="25" viewBox="0 0 24 25"><path d="M1 5.500 L21.500 1 L22.500 6 L2 10.500 Z" fill="#7a3fe0"/><rect x="1" y="9" width="22" height="7.500" rx="1.500" fill="#a268f5"/><rect x="1" y="15.500" width="22" height="8" rx="2" fill="#c68cf8"/><rect x="1" y="19" width="22" height="4.500" rx="2" fill="#8d4fe8"/></svg>
<!-- sams -->
<div class="abs" style="left:742px;top:868px;width:25px;height:24px;border-radius:50% 50% 45% 45%;background:linear-gradient(180deg,#f2c84a 0,#e8b93c 45%,#f5e7b8 46%,#f7edc8 100%)"></div>
<div class="abs" style="left:740px;top:875px;width:29px;text-align:center;font-size:10px;font-weight:bold;font-style:italic;color:#1e64b4;line-height:12px;letter-spacing:-.5px">Sam's</div>
<!-- colored ring -->
<svg class="abs" style="left:790px;top:867px" width="26" height="26" viewBox="0 0 26 26"><circle cx="13" cy="13" r="9" fill="none" stroke="#e53a2a" stroke-width="6" stroke-dasharray="19 100" transform="rotate(-140 13 13)"/><circle cx="13" cy="13" r="9" fill="none" stroke="#3f87e8" stroke-width="6" stroke-dasharray="12 100" transform="rotate(-20 13 13)"/><circle cx="13" cy="13" r="9" fill="none" stroke="#f5c12e" stroke-width="6" stroke-dasharray="14 100" transform="rotate(50 13 13)"/><circle cx="13" cy="13" r="9" fill="none" stroke="#3bab4a" stroke-width="6" stroke-dasharray="15 100" transform="rotate(130 13 13)"/><rect x="9.500" y="9.500" width="7" height="7" fill="#fff" transform="rotate(45 13 13)"/></svg>
<!-- chrome -->
<svg class="abs" style="left:839px;top:867px" width="26" height="26" viewBox="0 0 26 26"><circle cx="13" cy="13" r="12" fill="#e33b2e"/><path d="M13 13 L2.600 7 A12 12 0 0 0 13 25 Z" fill="#2da94f"/><path d="M13 13 L13 25 A12 12 0 0 0 23.400 7 Z" fill="#fbc116"/><path d="M13 13 L23.400 7 A12 12 0 0 0 2.600 7 Z" fill="#e33b2e"/><circle cx="13" cy="13" r="5.600" fill="#fff"/><circle cx="13" cy="13" r="4.300" fill="#3f7ee8"/></svg>
<!-- phone link -->
<svg class="abs" style="left:889px;top:868px" width="24" height="24" viewBox="0 0 24 24"><rect x="1" y="2" width="20" height="16" rx="2" fill="#1463c0"/><rect x="6" y="1" width="14" height="19" rx="2" fill="#2a8ae8"/><rect x="8" y="3.500" width="10" height="12" fill="#39b3f2"/><path d="M2 19 H14 V21.500 H2 Z" fill="#0f4f9e"/></svg>
<div class="abs" style="left:904px;top:879px;width:20px;height:17px;border-radius:9px;background:#dcdcdc;border:1px solid #555;font-size:11.500px;color:#111;text-align:center;line-height:15px">67</div>
<div class="abs" style="left:881px;top:898px;width:40px;height:2px;background:#0a63d1"></div>
<!-- active app -->
<div class="abs" style="left:926px;top:860px;width:48px;height:40px;background:#f0f5f5"></div>
<div class="abs" style="left:926px;top:898px;width:48px;height:2px;background:#0a63d1"></div>
<svg class="abs" style="left:938px;top:868px" width="24" height="24" viewBox="0 0 24 24"><rect width="24" height="24" rx="5" fill="#1cc0cd"/><path d="M6 3.500 H9 V12 H6 Z M6 10 H11 V13 H6 Z" fill="#fff"/><circle cx="8.500" cy="17.500" r="3" fill="#fff"/><path d="M12.500 15 L18.500 11.500 V14 L15.500 17.500 L18.500 20.500 H12.500 Z" fill="#fff"/><path d="M12 7 L15 5 V6.300 H19 V8.700 H15 V9.800 Z" fill="#fff"/></svg>
<!-- tray -->
<svg class="abs" style="left:1179px;top:868px" width="24" height="22" viewBox="0 0 24 22"><rect x="0" y="1" width="22" height="19" rx="2" fill="#17a83a"/><path d="M22 6 L24 8 V20 H22 Z" fill="#0d7d28"/><path d="M11 4 a3.600 3.600 0 0 1 2 6.600 V12 H9 V10.600 A3.600 3.600 0 0 1 11 4 Z" fill="#fff"/><rect x="3" y="14.500" width="16" height="2.500" fill="#d6e62e"/></svg>
<div class="abs" style="left:1211px;top:871px;font-size:13.75px;color:#1a1a1a;line-height:18px;white-space:nowrap">Watchlist ideas</div>
<svg class="abs" style="left:1332px;top:875px" width="14" height="9" viewBox="0 0 14 9"><path d="M1 8 L7 1.500 L13 8" fill="none" stroke="#111" stroke-width="1.400"/></svg>
<svg class="abs" style="left:1364px;top:870px" width="14" height="20" viewBox="0 0 14 20"><rect x="1.500" y="5.500" width="8" height="9" rx="2" fill="none" stroke="#111" stroke-width="1.300"/><path d="M9.500 8.500 L12.500 6.500 V13.500 L9.500 11.500" fill="none" stroke="#111" stroke-width="1.200"/><path d="M2.500 2.500 a5 3 0 0 1 6 0 M2.500 17.500 a5 3 0 0 0 6 0" fill="none" stroke="#111" stroke-width="1.100"/></svg>
<svg class="abs" style="left:1393px;top:871px" width="20" height="18" viewBox="0 0 20 18"><path d="M5 12 a4 4 0 0 1 0.800 -7.900 a5 5 0 0 1 9.400 1.200 a3.500 3.500 0 0 1 0.300 6.700 Z" fill="#8a8a8a" stroke="#555" stroke-width=".8"/><circle cx="13.500" cy="12.500" r="4.300" fill="#1a78e8"/><path d="M11.500 12 a2.200 2.200 0 0 1 3.800 -1 M15.500 13 a2.200 2.200 0 0 1 -3.800 1" fill="none" stroke="#fff" stroke-width="1"/></svg>
<svg class="abs" style="left:1427px;top:872px" width="18" height="16" viewBox="0 0 18 16"><g fill="none" stroke="#111" stroke-width="1.300"><path d="M2 14 a12 12 0 0 1 12 -12"/><path d="M5.500 14 a8.500 8.500 0 0 1 8.500 -8.500"/><path d="M9 14 a5 5 0 0 1 5 -5"/></g><circle cx="13" cy="13" r="1.600" fill="#111"/></svg>
<svg class="abs" style="left:1457px;top:871px" width="20" height="18" viewBox="0 0 20 18"><path d="M1.500 6.500 H4.500 L8.500 3 V15 L4.500 11.500 H1.500 Z" fill="none" stroke="#111" stroke-width="1.200" stroke-linejoin="round"/><path d="M11 6.500 a3.500 3.500 0 0 1 0 5 M13 4.500 a6 6 0 0 1 0 9" fill="none" stroke="#111" stroke-width="1.100"/><path d="M15.500 2.500 a9 9 0 0 1 0 13" fill="none" stroke="#777" stroke-width="1"/></svg>
<div class="abs" style="left:1473px;top:863px;width:80px;text-align:center;font-size:12px;letter-spacing:-.45px;color:#1a1a1a;line-height:18px">6:14 PM</div>
<div class="abs" style="left:1473px;top:881px;width:80px;text-align:center;font-size:12px;letter-spacing:-.2px;color:#1a1a1a;line-height:18px">3/20/2026</div>
<svg class="abs" style="left:1558px;top:872px" width="18" height="16" viewBox="0 0 18 16"><path d="M1 1 H17 V12 H5 L1 15.500 Z" fill="#111"/><path d="M3.500 4 H14.500 M3.500 6.500 H14.500 M3.500 9 H14.500" stroke="#dfe9e2" stroke-width="1"/></svg>
<div class="abs" style="left:1565px;top:878px;width:21px;height:17px;border-radius:9px;background:#d9dedb;border:1px solid #666;font-size:11.500px;color:#111;text-align:center;line-height:15px">32</div>
<div class="abs" style="left:1594px;top:862px;width:1px;height:38px;background:#9aa5a0"></div>
<svg class="abs" style="left:635px;top:131px" width="657" height="717" viewBox="635 131 657 717" text-rendering="geometricPrecision">
<path d="M721.9,209.5C724.2,206.0 729.3,198.8 735.1,196.3C740.9,193.9 750.3,194.3 756.9,194.8C763.5,195.3 769.8,199.6 774.7,199.4C779.7,199.3 779.8,194.6 786.4,194.0C793.0,193.3 807.8,193.5 814.4,195.5C821.0,197.6 824.0,202.3 826.1,206.4C828.1,210.6 827.2,217.1 826.8,220.4C826.4,223.8 824.0,224.1 823.7,226.6C823.5,229.2 826.3,232.9 825.3,236.0C824.2,239.1 818.9,241.9 817.5,245.3C816.1,248.7 815.4,254.4 816.7,256.2C818.0,258.0 822.3,255.2 825.3,256.2C828.3,257.2 831.9,260.1 834.6,262.4C837.3,264.7 840.2,265.8 841.6,270.2C843.0,274.6 843.4,283.4 843.2,288.8C842.9,294.3 842.3,299.7 840.0,302.8C837.8,305.9 838.9,306.6 829.9,307.5C821.0,308.4 795.0,309.1 786.4,308.3C777.9,307.5 780.6,304.3 778.6,302.8C776.7,301.4 777.1,299.5 774.7,299.7C772.4,300.0 773.3,303.4 764.6,304.4C756.0,305.4 731.7,305.9 722.7,305.9C713.6,305.9 713.2,306.7 710.2,304.4C707.2,302.1 705.7,296.4 704.8,292.0C703.9,287.5 703.9,281.7 704.8,278.0C705.7,274.2 707.8,271.2 710.2,269.4C712.7,267.6 716.3,267.6 719.5,267.1C722.8,266.6 728.0,269.9 729.7,266.3C731.3,262.7 730.9,250.1 729.7,245.3C728.4,240.5 723.3,240.4 721.9,237.5C720.5,234.7 720.8,230.3 721.1,228.2C721.4,226.1 723.4,226.9 723.4,225.1C723.4,223.3 721.4,219.9 721.1,217.3C720.8,214.7 719.5,213.0 721.9,209.5Z" fill="#5a0f15" />
<clipPath id="c1"><rect x="721.1" y="195.5" width="108.8" height="49.4"/></clipPath>
<g clip-path="url(#c1)"><text x="731.7" y="236.3" font-family="'Liberation Sans',sans-serif" font-weight="bold" font-style="normal" font-size="45.1" textLength="84.0" lengthAdjust="spacingAndGlyphs" fill="#f48fb1" stroke="#f48fb1" stroke-width="1.55" stroke-linejoin="round" paint-order="stroke" >god&#8217;s</text></g>
<text x="741.6" y="272.1" font-family="'Liberation Sans',sans-serif" font-weight="bold" font-style="normal" font-size="43.5" textLength="64.7" lengthAdjust="spacingAndGlyphs" fill="#f48fb1" stroke="#f48fb1" stroke-width="1.55" stroke-linejoin="round" paint-order="stroke" >Love</text>
<text x="715.7" y="295.8" font-family="'Liberation Sans',sans-serif" font-weight="normal" font-style="italic" font-size="36.5" textLength="116.2" lengthAdjust="spacingAndGlyphs" fill="#f0483a" stroke="#f0483a" stroke-width="0.78" stroke-linejoin="round" paint-order="stroke" >never fails</text>
<path d="M866.0,199.4C867.9,197.2 869.0,195.6 871.4,194.3C873.9,193.0 874.8,191.9 880.8,191.7C886.7,191.4 899.7,192.8 907.2,192.8C914.7,192.7 918.6,191.2 925.9,191.2C933.1,191.1 943.5,192.4 950.7,192.4C958.0,192.4 965.0,191.1 969.4,191.2C973.8,191.3 975.0,192.1 977.2,193.2C979.3,194.3 981.0,195.9 982.1,197.9C983.3,199.8 984.0,202.2 984.3,204.9C984.7,207.6 984.4,211.1 984.2,214.2C983.9,217.3 982.2,220.7 982.6,223.5C983.0,226.4 986.0,228.2 986.8,231.3C987.7,234.4 987.7,238.6 987.7,242.2C987.7,245.8 987.7,249.7 986.8,253.1C986.0,256.4 982.4,259.4 982.6,262.4C982.9,265.4 987.3,268.1 988.4,271.0C989.4,273.8 989.5,276.8 988.8,279.5C988.1,282.2 985.6,285.2 984.2,287.3C982.7,289.4 980.8,289.4 980.0,292.0C979.1,294.5 979.8,299.7 979.0,302.8C978.3,305.9 977.5,308.6 975.6,310.6C973.7,312.6 974.1,313.9 967.8,314.7C961.6,315.4 948.4,315.3 938.3,315.3C928.2,315.3 916.8,314.7 907.2,314.7C897.6,314.7 886.7,315.7 880.8,315.3C874.8,314.9 874.3,313.7 871.4,312.2C868.6,310.6 866.2,308.3 863.7,305.9C861.1,303.6 858.0,301.0 856.2,298.2C854.4,295.3 853.0,291.6 852.8,288.8C852.5,286.1 853.3,283.7 854.6,281.8C855.9,280.0 858.9,279.1 860.5,278.0C862.2,276.8 864.8,277.2 864.4,274.8C864.0,272.5 859.6,268.6 858.2,264.0C856.8,259.3 856.5,252.0 856.2,246.9C855.9,241.7 855.6,236.2 856.2,232.9C856.8,229.5 859.4,229.2 859.8,226.6C860.2,224.1 858.7,220.4 858.7,217.3C858.7,214.2 858.6,211.0 859.8,208.0C861.0,205.0 864.0,201.7 866.0,199.4Z" fill="#360b7c" />
<text x="869.9" y="226.6" font-family="'Liberation Sans',sans-serif" font-weight="bold" font-style="normal" font-size="35.0" textLength="104.5" lengthAdjust="spacingAndGlyphs" fill="#bb33fb" stroke="#bb33fb" stroke-width="3.42" stroke-linejoin="round" paint-order="stroke" transform="rotate(-5 922.1 226.6)" >JESUS</text>
<text x="866.8" y="258.5" font-family="'Liberation Sans',sans-serif" font-weight="bold" font-style="normal" font-size="35.5" textLength="110.7" lengthAdjust="spacingAndGlyphs" fill="#bb33fb" stroke="#bb33fb" stroke-width="3.42" stroke-linejoin="round" paint-order="stroke" transform="rotate(-9 922.1 258.5)" >LOVES</text>
<text x="876.4" y="304.7" font-family="'Liberation Sans',sans-serif" font-weight="bold" font-style="normal" font-size="55.2" textLength="92.7" lengthAdjust="spacingAndGlyphs" fill="#bb33fb" stroke="#bb33fb" stroke-width="4.66" stroke-linejoin="round" paint-order="stroke" >ME</text>
<path d="M0,-4 C-2,-9 -10,-9 -10,-3 C-10,2 -4,6 0,10 C4,6 10,2 10,-3 C10,-9 2,-9 0,-4 Z" fill="#f783ac" transform="translate(867.1 293.5) rotate(-12) scale(0.606)"/>
<path d="M0,-4 C-2,-9 -10,-9 -10,-3 C-10,2 -4,6 0,10 C4,6 10,2 10,-3 C10,-9 2,-9 0,-4 Z" fill="#f783ac" transform="translate(974.1 277.2) rotate(12) scale(0.606)"/>
<path d="M1006.7,218.9C1007.8,214.7 1009.1,209.3 1012.1,206.4C1015.1,203.6 1020.4,201.5 1024.5,201.8C1028.7,202.0 1031.0,206.6 1037.0,208.0C1042.9,209.4 1054.1,210.6 1060.3,210.3C1066.5,210.1 1070.2,208.1 1074.3,206.4C1078.4,204.7 1081.6,200.7 1085.2,200.2C1088.8,199.7 1091.9,203.1 1096.1,203.3C1100.2,203.6 1105.7,201.1 1110.1,201.8C1114.5,202.4 1119.7,205.5 1122.5,207.2C1125.4,208.9 1124.8,210.8 1127.2,211.9C1129.5,212.9 1134.3,212.0 1136.5,213.4C1138.7,214.9 1140.1,217.4 1140.4,220.4C1140.6,223.4 1139.0,227.7 1138.1,231.3C1137.1,234.9 1135.1,238.6 1134.9,242.2C1134.8,245.8 1137.5,249.5 1137.3,253.1C1137.0,256.7 1134.0,260.3 1133.4,264.0C1132.7,267.6 1134.4,271.5 1133.4,274.8C1132.4,278.2 1129.8,281.8 1127.2,284.2C1124.6,286.5 1122.0,288.3 1117.8,288.8C1113.7,289.4 1106.2,287.3 1102.3,287.3C1098.4,287.3 1097.9,288.8 1094.5,288.8C1091.1,288.8 1086.2,287.2 1082.1,287.3C1077.9,287.4 1073.8,289.6 1069.6,289.6C1065.5,289.6 1061.1,287.5 1057.2,287.3C1053.3,287.0 1050.2,288.1 1046.3,288.1C1042.4,288.1 1037.8,287.2 1033.9,287.3C1030.0,287.4 1026.9,289.4 1023.0,288.8C1019.1,288.3 1013.7,286.8 1010.5,284.2C1007.4,281.6 1005.5,277.2 1004.3,273.3C1003.2,269.4 1003.0,264.0 1003.6,260.9C1004.1,257.7 1005.8,256.3 1007.4,254.6C1009.1,253.0 1013.7,252.8 1013.7,250.7C1013.7,248.7 1008.9,245.4 1007.4,242.2C1006.0,239.0 1005.2,235.2 1005.1,231.3C1005.0,227.4 1005.5,223.0 1006.7,218.9Z" fill="#1ff3fa" />
<text x="1016.0" y="239.4" font-family="'Liberation Serif',serif" font-weight="normal" font-style="italic" font-size="39.7" textLength="113.0" lengthAdjust="spacingAndGlyphs" fill="#1e7178" stroke="#1e7178" stroke-width="0.78" stroke-linejoin="round" paint-order="stroke" >loved by</text>
<text x="1014.4" y="278.3" font-family="'Liberation Sans',sans-serif" font-weight="bold" font-style="normal" font-size="45.1" textLength="112.0" lengthAdjust="spacingAndGlyphs" fill="#1e7178" stroke="#1e7178" stroke-width="2.18" stroke-linejoin="round" paint-order="stroke" >JESUS</text>
<path d="M707.0,327.0C709.2,324.8 707.5,323.7 718.0,322.0C728.5,320.3 752.7,317.0 770.0,317.0C787.3,317.0 810.8,320.7 822.0,322.0C833.2,323.3 834.0,322.8 837.0,325.0C840.0,327.2 840.2,330.7 840.0,335.0C839.8,339.3 836.3,346.0 836.0,351.0C835.7,356.0 838.3,360.3 838.0,365.0C837.7,369.7 834.2,374.7 834.0,379.0C833.8,383.3 836.5,386.7 837.0,391.0C837.5,395.3 836.7,399.3 837.0,405.0C837.3,410.7 839.3,419.7 839.0,425.0C838.7,430.3 836.5,433.3 835.0,437.0C833.5,440.7 831.2,443.3 830.0,447.0C828.8,450.7 830.0,455.7 828.0,459.0C826.0,462.3 822.3,464.8 818.0,467.0C813.7,469.2 810.0,471.5 802.0,472.0C794.0,472.5 782.0,470.0 770.0,470.0C758.0,470.0 739.3,472.3 730.0,472.0C720.7,471.7 718.2,470.5 714.0,468.0C709.8,465.5 707.0,462.5 705.0,457.0C703.0,451.5 702.0,441.3 702.0,435.0C702.0,428.7 705.2,424.7 705.0,419.0C704.8,413.3 701.5,406.7 701.0,401.0C700.5,395.3 701.3,389.7 702.0,385.0C702.7,380.3 705.0,376.7 705.0,373.0C705.0,369.3 701.7,367.7 702.0,363.0C702.3,358.3 706.5,349.7 707.0,345.0C707.5,340.3 705.0,338.0 705.0,335.0C705.0,332.0 704.8,329.2 707.0,327.0Z" fill="#e8191e" />
<path d="M717.0,331.4 Q772.0,322.0 828.0,331.4 L822.0,342.4 L828.0,353.4 Q772.0,343.4 717.0,353.4 L721.6,342.4 Z" fill="#f0c8b8"/>
<text x="725.6" y="346.6" font-family="'Liberation Sans',sans-serif" font-weight="bold" font-style="normal" font-size="22.4" textLength="96.8" lengthAdjust="spacingAndGlyphs" fill="#33302f" >Y&#8217;ALL LUCKY</text>
<path d="M0,-4 C-2,-9 -10,-9 -10,-3 C-10,2 -4,6 0,10 C4,6 10,2 10,-3 C10,-9 2,-9 0,-4 Z" fill="#f0c8b8" transform="translate(817.0 360.6) rotate(12) scale(0.580)"/>
<path d="M0,-4 C-2,-9 -10,-9 -10,-3 C-10,2 -4,6 0,10 C4,6 10,2 10,-3 C10,-9 2,-9 0,-4 Z" fill="#f0c8b8" transform="translate(821.0 373.4) rotate(12) scale(0.420)"/>
<text x="711.6" y="399.0" font-family="'Liberation Serif',serif" font-weight="bold" font-style="italic" font-size="51.0" textLength="113.6" lengthAdjust="spacingAndGlyphs" fill="#f0c8b8" stroke="#f0c8b8" stroke-width="0.80" stroke-linejoin="round" paint-order="stroke" >Jesus</text>
<text x="733.4" y="371.6" font-family="'Liberation Sans',sans-serif" font-weight="bold" font-style="normal" font-size="25.6" textLength="76.2" lengthAdjust="spacingAndGlyphs" fill="#33302f" stroke="#33302f" stroke-width="0.60" stroke-linejoin="round" paint-order="stroke" >I&#8217;VE GOT</text>
<text x="734.2" y="424.6" font-family="'Liberation Sans',sans-serif" font-weight="bold" font-style="normal" font-size="25.6" textLength="50.6" lengthAdjust="spacingAndGlyphs" fill="#33302f" stroke="#33302f" stroke-width="0.60" stroke-linejoin="round" paint-order="stroke" >IN MY</text>
<path d="M0,-4 C-2,-9 -10,-9 -10,-3 C-10,2 -4,6 0,10 C4,6 10,2 10,-3 C10,-9 2,-9 0,-4 Z" fill="none" stroke="#33302f" stroke-width="0.98" transform="translate(808.8 419.4) rotate(0) scale(2.050)"/>
<text x="713.6" y="459.0" font-family="'Liberation Serif',serif" font-weight="bold" font-style="italic" font-size="47.0" textLength="116.4" lengthAdjust="spacingAndGlyphs" fill="#f0c8b8" stroke="#f0c8b8" stroke-width="2.20" stroke-linejoin="round" paint-order="stroke" >heart</text>
<path d="M858.3,339.9C860.3,336.8 863.5,333.8 868.1,331.9C872.7,330.0 877.9,328.2 885.9,328.3C893.9,328.5 907.5,332.3 916.1,332.8C924.7,333.2 931.5,330.9 937.4,331.0C943.4,331.1 946.9,333.4 951.7,333.7C956.4,334.0 961.1,331.7 965.9,332.8C970.6,333.8 976.6,336.9 980.1,339.9C983.7,342.9 986.3,346.4 987.2,350.6C988.1,354.7 986.5,360.9 985.4,364.8C984.4,368.6 980.7,370.4 981.0,373.7C981.3,376.9 986.5,381.1 987.2,384.3C988.0,387.6 987.8,390.3 985.4,393.2C983.1,396.2 973.9,399.1 973.0,402.1C972.1,405.1 978.2,407.1 980.1,411.0C982.0,414.9 984.3,420.5 984.6,425.2C984.9,430.0 983.8,435.3 981.9,439.4C980.0,443.6 976.3,446.9 973.0,450.1C969.7,453.4 966.2,456.8 962.3,459.0C958.5,461.2 954.3,463.7 949.9,463.4C945.4,463.1 939.5,458.0 935.7,457.2C931.8,456.5 930.0,458.1 926.8,459.0C923.5,459.9 920.0,462.6 916.1,462.6C912.3,462.6 911.4,459.6 903.7,459.0C896.0,458.4 877.0,459.6 869.9,459.0C862.8,458.4 863.2,458.1 861.0,455.4C858.8,452.8 857.0,448.6 856.6,443.0C856.1,437.4 858.5,429.7 858.3,421.7C858.2,413.7 855.7,403.9 855.7,395.0C855.7,386.1 858.2,375.7 858.3,368.3C858.5,360.9 856.6,355.3 856.6,350.6C856.6,345.8 856.4,343.0 858.3,339.9Z" fill="#ca80a4" />
<path d="M893.0,344.3 Q937.4,341.7 977.4,356.2" stroke="#f2c6b4" stroke-width="1.2" fill="none"/>
<ellipse cx="898.3" cy="342.6" rx="6.0" ry="2.3" fill="#f2c6b4" transform="rotate(-20 898.3 342.6)"/>
<ellipse cx="913.4" cy="348.8" rx="6.0" ry="2.3" fill="#f2c6b4" transform="rotate(20 913.4 348.8)"/>
<ellipse cx="923.2" cy="343.1" rx="6.0" ry="2.3" fill="#f2c6b4" transform="rotate(-25 923.2 343.1)"/>
<ellipse cx="934.8" cy="349.7" rx="6.0" ry="2.3" fill="#f2c6b4" transform="rotate(25 934.8 349.7)"/>
<ellipse cx="945.4" cy="343.4" rx="6.0" ry="2.3" fill="#f2c6b4" transform="rotate(-20 945.4 343.4)"/>
<ellipse cx="957.9" cy="350.6" rx="6.0" ry="2.3" fill="#f2c6b4" transform="rotate(25 957.9 350.6)"/>
<ellipse cx="970.3" cy="347.9" rx="6.0" ry="2.3" fill="#f2c6b4" transform="rotate(-60 970.3 347.9)"/>
<text x="868.1" y="369.2" font-family="'Liberation Serif',serif" font-weight="normal" font-style="italic" font-size="35.6" textLength="81.8" lengthAdjust="spacingAndGlyphs" fill="#33302f" stroke="#33302f" stroke-width="0.89" stroke-linejoin="round" paint-order="stroke" >Jesus</text>
<text x="866.3" y="388.2" font-family="'Liberation Sans',sans-serif" font-weight="normal" font-style="normal" font-size="17.8" textLength="67.6" lengthAdjust="spacingAndGlyphs" fill="#33302f" >LOVES YOU</text>
<text x="897.8" y="410.6" font-family="'Liberation Serif',serif" font-weight="normal" font-style="normal" font-size="22.2" textLength="44.1" lengthAdjust="spacingAndGlyphs" fill="#33302f" stroke="#33302f" stroke-width="0.36" stroke-linejoin="round" paint-order="stroke" >&amp; I&#8217;M</text>
<text x="881.4" y="436.2" font-family="'Liberation Serif',serif" font-weight="normal" font-style="italic" font-size="38.2" textLength="90.7" lengthAdjust="spacingAndGlyphs" fill="#33302f" stroke="#33302f" stroke-width="1.07" stroke-linejoin="round" paint-order="stroke" >trying</text>
<g transform="rotate(5 956.6 390.6)"><path d="M951.3,362.6 L953.8,364.8 L956.6,360.9 L959.5,364.8 L962.0,362.6 L963.8,368.3 L960.6,377.2 L970.3,376.3 L975.7,374.6 L973.4,377.2 L977.4,381.7 L973.4,386.1 L975.7,388.8 L970.3,387.0 L960.9,386.1 L962.7,414.6 L960.6,417.2 L956.6,421.3 L952.7,417.2 L950.6,414.6 L952.4,386.1 L943.0,387.0 L937.6,388.8 L939.9,386.1 L935.8,381.7 L939.9,377.2 L937.6,374.6 L943.0,376.3 L952.7,377.2 L949.5,368.3 Z" fill="#f2c6b4" stroke="#33302f" stroke-width="0.8" stroke-linejoin="round"/></g>
<circle cx="877.4" cy="396.0" r="5.5" fill="#f2c6b4"/><circle cx="883.1" cy="400.2" r="5.5" fill="#f2c6b4"/><circle cx="880.9" cy="407.0" r="5.5" fill="#f2c6b4"/><circle cx="873.8" cy="407.0" r="5.5" fill="#f2c6b4"/><circle cx="871.6" cy="400.2" r="5.5" fill="#f2c6b4"/><circle cx="877.4" cy="402.1" r="3.3" fill="#33302f"/>
<circle cx="877.9" cy="432.0" r="5.2" fill="#f2c6b4"/><circle cx="883.3" cy="435.9" r="5.2" fill="#f2c6b4"/><circle cx="881.2" cy="442.3" r="5.2" fill="#f2c6b4"/><circle cx="874.6" cy="442.3" r="5.2" fill="#f2c6b4"/><circle cx="872.5" cy="435.9" r="5.2" fill="#f2c6b4"/><circle cx="877.9" cy="437.7" r="3.1" fill="#33302f"/>
<ellipse cx="872.9" cy="422.2" rx="6.8" ry="2.5" fill="#33302f" transform="rotate(55 872.9 422.2)"/>
<ellipse cx="890.3" cy="446.6" rx="7.1" ry="2.5" fill="#33302f" transform="rotate(25 890.3 446.6)"/>
<path d="M1013.9,332.8C1015.1,328.7 1017.7,324.0 1021.4,321.4C1025.2,318.9 1031.8,318.0 1036.6,317.7C1041.3,317.4 1045.7,320.5 1049.8,319.6C1053.9,318.6 1056.7,314.4 1061.1,312.0C1065.5,309.6 1071.5,306.2 1076.2,305.4C1081.0,304.6 1086.0,305.5 1089.5,307.3C1092.9,309.0 1095.3,313.4 1097.0,315.8C1098.7,318.1 1096.7,320.5 1099.8,321.4C1103.0,322.4 1111.6,319.9 1115.9,321.4C1120.1,323.0 1123.5,328.1 1125.3,330.9C1127.2,333.7 1126.1,335.9 1127.2,338.4C1128.3,341.0 1131.3,342.9 1132.0,346.0C1132.6,349.2 1131.8,354.5 1131.0,357.3C1130.2,360.2 1126.8,360.2 1127.2,363.0C1127.7,365.8 1132.7,369.9 1133.8,374.3C1134.9,378.7 1134.5,385.0 1133.8,389.5C1133.2,393.9 1129.8,397.0 1130.1,400.8C1130.4,404.6 1134.8,407.7 1135.7,412.1C1136.7,416.5 1136.8,422.8 1135.7,427.2C1134.6,431.6 1132.4,435.7 1129.1,438.6C1125.8,441.4 1118.7,443.0 1115.9,444.2C1113.1,445.5 1115.3,445.8 1112.1,446.1C1109.0,446.4 1102.0,446.0 1097.0,446.1C1092.0,446.3 1088.5,446.4 1081.9,447.1C1075.3,447.7 1063.3,448.5 1057.3,449.9C1051.4,451.3 1049.8,454.3 1046.0,455.6C1042.2,456.8 1038.1,458.4 1034.7,457.5C1031.2,456.5 1027.3,452.7 1025.2,449.9C1023.2,447.1 1024.3,443.0 1022.4,440.5C1020.5,437.9 1016.4,437.3 1013.9,434.8C1011.4,432.3 1008.5,429.1 1007.3,425.3C1006.0,421.6 1005.5,415.9 1006.3,412.1C1007.1,408.3 1011.5,406.5 1012.0,402.7C1012.5,398.9 1009.2,394.2 1009.2,389.5C1009.2,384.7 1011.8,379.7 1012.0,374.3C1012.2,369.0 1009.8,362.1 1010.1,357.3C1010.4,352.6 1013.3,350.1 1013.9,346.0C1014.5,341.9 1012.6,336.9 1013.9,332.8Z" fill="#bd4af8" />
<text x="1021.4" y="352.0" font-family="'Liberation Serif',serif" font-weight="normal" font-style="italic" font-size="42.5" textLength="99.7" lengthAdjust="spacingAndGlyphs" fill="#8cf238" stroke="#8cf238" stroke-width="1.32" stroke-linejoin="round" paint-order="stroke" >god is</text>
<text x="1019.2" y="397.4" font-family="'Liberation Sans',sans-serif" font-weight="bold" font-style="normal" font-size="37.8" textLength="103.9" lengthAdjust="spacingAndGlyphs" fill="#8cf238" stroke="#8cf238" stroke-width="0.94" stroke-linejoin="round" paint-order="stroke" >ALWAYS</text>
<text x="1032.8" y="427.6" font-family="'Liberation Serif',serif" font-weight="normal" font-style="italic" font-size="40.6" textLength="77.1" lengthAdjust="spacingAndGlyphs" fill="#8cf238" stroke="#8cf238" stroke-width="1.32" stroke-linejoin="round" paint-order="stroke" >good</text>
<path d="M0,-4 C-2,-9 -10,-9 -10,-3 C-10,2 -4,6 0,10 C4,6 10,2 10,-3 C10,-9 2,-9 0,-4 Z" fill="none" stroke="#8cf238" stroke-width="2.57" transform="translate(1023.3 418.7) rotate(0) scale(0.661)"/>
<path d="M0,-4 C-2,-9 -10,-9 -10,-3 C-10,2 -4,6 0,10 C4,6 10,2 10,-3 C10,-9 2,-9 0,-4 Z" fill="none" stroke="#8cf238" stroke-width="2.57" transform="translate(1119.1 419.7) rotate(0) scale(0.661)"/>
<path d="M705.8,506.7C706.7,501.1 709.6,492.8 713.3,488.3C717.1,483.9 723.6,481.1 728.3,480.0C733.1,478.9 737.2,480.3 741.7,481.7C746.1,483.1 750.0,487.8 755.0,488.3C760.0,488.9 766.7,485.8 771.7,485.0C776.7,484.2 781.4,481.9 785.0,483.3C788.6,484.7 790.0,491.4 793.3,493.3C796.7,495.3 800.6,494.2 805.0,495.0C809.4,495.8 816.1,496.1 820.0,498.3C823.9,500.6 827.5,504.4 828.3,508.3C829.2,512.2 826.9,517.8 825.0,521.7C823.1,525.6 817.8,528.1 816.7,531.7C815.6,535.3 818.6,540.0 818.3,543.3C818.1,546.7 814.4,548.9 815.0,551.7C815.6,554.4 820.3,556.7 821.7,560.0C823.1,563.3 824.2,568.1 823.3,571.7C822.5,575.3 817.8,577.8 816.7,581.7C815.6,585.6 817.5,591.4 816.7,595.0C815.8,598.6 816.9,601.4 811.7,603.3C806.4,605.3 795.0,606.2 785.0,606.7C775.0,607.1 761.4,605.8 751.7,605.8C741.9,605.8 731.9,607.4 726.7,606.7C721.4,606.0 723.3,603.1 720.0,601.7C716.7,600.3 710.3,600.6 706.7,598.3C703.1,596.1 699.7,591.9 698.3,588.3C696.9,584.7 697.2,580.0 698.3,576.7C699.4,573.3 702.2,570.3 705.0,568.3C707.8,566.4 713.9,566.7 715.0,565.0C716.1,563.3 711.4,560.6 711.7,558.3C711.9,556.1 716.9,553.9 716.7,551.7C716.4,549.4 710.0,548.3 710.0,545.0C710.0,541.7 716.9,535.6 716.7,531.7C716.4,527.8 710.1,525.8 708.3,521.7C706.5,517.5 705.0,512.2 705.8,506.7Z" fill="#fcdcd3" />
<text x="713.3" y="521.3" font-family="'Liberation Serif',serif" font-weight="bold" font-style="italic" font-size="48.3" textLength="107.0" lengthAdjust="spacingAndGlyphs" fill="#5c5149" stroke="#5c5149" stroke-width="0.83" stroke-linejoin="round" paint-order="stroke" >Coffee</text>
<text x="721.2" y="547.2" font-family="'Liberation Sans',sans-serif" font-weight="bold" font-style="normal" font-size="19.7" textLength="64.3" lengthAdjust="spacingAndGlyphs" fill="#f0906a" stroke="#f0906a" stroke-width="0.33" stroke-linejoin="round" paint-order="stroke" >gets me</text>
<text x="744.5" y="565.5" font-family="'Liberation Sans',sans-serif" font-weight="bold" font-style="normal" font-size="18.0" textLength="56.8" lengthAdjust="spacingAndGlyphs" fill="#f0906a" stroke="#f0906a" stroke-width="0.33" stroke-linejoin="round" paint-order="stroke" >started</text>
<text x="705.0" y="585.3" font-family="'Liberation Serif',serif" font-weight="bold" font-style="italic" font-size="39.7" textLength="103.0" lengthAdjust="spacingAndGlyphs" fill="#5c5149" stroke="#5c5149" stroke-width="1.00" stroke-linejoin="round" paint-order="stroke" >Jesus</text>
<text x="727.0" y="598.3" font-family="'Liberation Sans',sans-serif" font-weight="bold" font-style="normal" font-size="12.5" textLength="81.8" lengthAdjust="spacingAndGlyphs" fill="#f0906a" stroke="#f0906a" stroke-width="0.33" stroke-linejoin="round" paint-order="stroke" >keeps me going</text>
<path d="M789.7,523.7 L808.7,527.0 L803.0,548.0 L788.7,545.0 Z" fill="#78aa9e" stroke="#78aa9e" stroke-width="2" stroke-linejoin="round"/>
<ellipse cx="799.2" cy="525.2" rx="9.2" ry="1.5" fill="#e6f2ee" transform="rotate(10 799.2 525.2)"/>
<path d="M808.0,532.0 L811.3,533.0 L809.2,542.0 L805.3,541.3" fill="none" stroke="#78aa9e" stroke-width="2.7" stroke-linejoin="round"/>
<ellipse cx="746.0" cy="527.7" rx="5.7" ry="3.2" fill="#5c5149" transform="rotate(8 746.0 527.7)"/>
<ellipse cx="808.7" cy="557.2" rx="5.7" ry="3.2" fill="#5c5149" transform="rotate(-50 808.7 557.2)"/>
<ellipse cx="811.3" cy="570.3" rx="5.7" ry="3.2" fill="#5c5149" transform="rotate(40 811.3 570.3)"/>
<rect x="854.7" y="474.7" width="110.7" height="41.2" rx="13.3" fill="#000"/>
<rect x="848.7" y="514.7" width="124.0" height="44.5" rx="7.5" fill="#000"/>
<rect x="844.7" y="556.3" width="132.3" height="45.3" rx="9.2" fill="#000"/>
<text x="879.7" y="512.5" font-family="'Liberation Sans',sans-serif" font-weight="normal" font-style="normal" font-size="37.5" textLength="60.8" lengthAdjust="spacingAndGlyphs" fill="#f5a03c" >GOD GiVeS HiS</text>
<text x="858.0" y="552.5" font-family="'Liberation Sans',sans-serif" font-weight="normal" font-style="normal" font-size="39.2" textLength="104.2" lengthAdjust="spacingAndGlyphs" fill="#bfd02e" >HARDeST BATTLeS TO HiS</text>
<text x="854.7" y="590.0" font-family="'Liberation Sans',sans-serif" font-weight="normal" font-style="normal" font-size="37.5" textLength="111.7" lengthAdjust="spacingAndGlyphs" fill="#4cbcc8" stroke="#4cbcc8" stroke-width="0.50" stroke-linejoin="round" paint-order="stroke" >TOUGHeST SOLDieRS</text>
<path d="M0,-4 C-2,-9 -10,-9 -10,-3 C-10,2 -4,6 0,10 C4,6 10,2 10,-3 C10,-9 2,-9 0,-4 Z" fill="#f04a8c" transform="translate(873.0 491.3) rotate(15) scale(0.367)"/>
<path d="M0,-4 C-2,-9 -10,-9 -10,-3 C-10,2 -4,6 0,10 C4,6 10,2 10,-3 C10,-9 2,-9 0,-4 Z" fill="#f04a8c" transform="translate(867.3 498.3) rotate(-15) scale(0.433)"/>
<path d="M0,-4 C-2,-9 -10,-9 -10,-3 C-10,2 -4,6 0,10 C4,6 10,2 10,-3 C10,-9 2,-9 0,-4 Z" fill="#f04a8c" transform="translate(872.0 506.7) rotate(20) scale(0.350)"/>
<path d="M0,-4 C-2,-9 -10,-9 -10,-3 C-10,2 -4,6 0,10 C4,6 10,2 10,-3 C10,-9 2,-9 0,-4 Z" fill="#f04a8c" transform="translate(946.0 491.3) rotate(-15) scale(0.367)"/>
<path d="M0,-4 C-2,-9 -10,-9 -10,-3 C-10,2 -4,6 0,10 C4,6 10,2 10,-3 C10,-9 2,-9 0,-4 Z" fill="#f04a8c" transform="translate(951.7 498.3) rotate(15) scale(0.433)"/>
<path d="M0,-4 C-2,-9 -10,-9 -10,-3 C-10,2 -4,6 0,10 C4,6 10,2 10,-3 C10,-9 2,-9 0,-4 Z" fill="#f04a8c" transform="translate(947.0 506.7) rotate(-20) scale(0.350)"/>
<path d="M989.2,480.0C989.6,475.7 990.1,472.9 993.3,470.8C996.5,468.8 1002.2,467.6 1008.3,467.5C1014.4,467.4 1023.9,470.1 1030.0,470.0C1036.1,469.9 1034.2,467.1 1045.0,466.7C1055.8,466.2 1085.1,466.4 1095.0,467.5C1104.9,468.6 1102.2,470.7 1104.2,473.3C1106.1,476.0 1105.4,480.3 1106.7,483.3C1107.9,486.4 1111.0,488.3 1111.7,491.7C1112.4,495.0 1111.9,500.3 1110.8,503.3C1109.7,506.4 1105.4,506.9 1105.0,510.0C1104.6,513.1 1108.9,518.3 1108.3,521.7C1107.8,525.0 1103.3,527.8 1101.7,530.0C1100.0,532.2 1097.9,532.5 1098.3,535.0C1098.8,537.5 1103.6,541.1 1104.2,545.0C1104.7,548.9 1102.9,554.2 1101.7,558.3C1100.4,562.5 1098.9,567.5 1096.7,570.0C1094.4,572.5 1090.0,570.8 1088.3,573.3C1086.7,575.8 1088.3,581.4 1086.7,585.0C1085.0,588.6 1081.9,592.8 1078.3,595.0C1074.7,597.2 1068.9,598.3 1065.0,598.3C1061.1,598.3 1057.8,596.4 1055.0,595.0C1052.2,593.6 1052.8,590.7 1048.3,590.0C1043.9,589.3 1033.3,591.7 1028.3,590.8C1023.3,590.0 1020.6,587.6 1018.3,585.0C1016.1,582.4 1015.7,578.3 1015.0,575.0C1014.3,571.7 1016.9,566.9 1014.2,565.0C1011.4,563.1 1002.2,564.7 998.3,563.3C994.4,561.9 992.2,560.8 990.8,556.7C989.4,552.5 990.3,545.6 990.0,538.3C989.7,531.1 989.0,520.3 989.2,513.3C989.3,506.4 990.8,502.2 990.8,496.7C990.8,491.1 988.8,484.3 989.2,480.0Z" fill="#98eff9" />
<text x="998.7" y="498.8" font-family="'Liberation Serif',serif" font-weight="normal" font-style="normal" font-size="29.7" textLength="104.3" lengthAdjust="spacingAndGlyphs" fill="#1f7fa8" stroke="#1f7fa8" stroke-width="0.33" stroke-linejoin="round" paint-order="stroke" >BE STILL</text>
<text x="998.7" y="524.8" font-family="'Liberation Serif',serif" font-weight="normal" font-style="normal" font-size="16.3" textLength="47.7" lengthAdjust="spacingAndGlyphs" fill="#1f7fa8" >LET GO</text>
<text x="998.7" y="551.5" font-family="'Liberation Serif',serif" font-weight="normal" font-style="normal" font-size="18.7" textLength="25.3" lengthAdjust="spacingAndGlyphs" fill="#1f7fa8" stroke="#1f7fa8" stroke-width="0.17" stroke-linejoin="round" paint-order="stroke" >LET</text>
<text x="1033.7" y="558.7" font-family="'Liberation Serif',serif" font-weight="normal" font-style="italic" font-size="45.0" textLength="60.5" lengthAdjust="spacingAndGlyphs" fill="#1f7fa8" stroke="#1f7fa8" stroke-width="0.67" stroke-linejoin="round" paint-order="stroke" >god</text>
<path d="M1055.0,519.2 C1058.3,513.3 1050.0,511.7 1050.0,518.3 C1050.8,526.7 1063.3,525.0 1060.8,514.2 C1059.2,506.7 1068.3,508.3 1085.0,520.0" fill="none" stroke="#1f7fa8" stroke-width="1.4" stroke-linecap="round"/>
<path d="M1085.0,520.0 C1091.7,521.7 1100.0,511.7 1095.8,509.2 C1090.0,508.3 1086.7,530.0 1085.8,548.3" fill="none" stroke="#1f7fa8" stroke-width="2.2" stroke-linecap="round"/>
<path d="M1041.7,561.7 C1040.0,570.0 1026.7,566.7 1023.3,573.3 C1025.0,580.0 1038.3,571.7 1041.7,570.0 C1053.3,580.0 1068.3,588.3 1075.0,580.0 C1078.3,571.7 1068.3,568.3 1067.5,575.0 C1067.5,579.2 1071.7,579.2 1071.7,575.8" fill="none" stroke="#1f7fa8" stroke-width="1.8" stroke-linecap="round"/>
<rect x="746.7" y="611.7" width="35.9" height="148.3" rx="13.2" fill="#570a80"/>
<rect x="707.6" y="634.0" width="116.7" height="49.5" rx="10.4" fill="#570a80"/>
<text x="718.3" y="672.3" font-family="'Liberation Sans',sans-serif" font-weight="bold" font-style="normal" font-size="37.8" textLength="35.5" lengthAdjust="spacingAndGlyphs" fill="#ff3838" stroke="#ff3838" stroke-width="1.89" stroke-linejoin="round" paint-order="stroke" >JE</text>
<text x="776.9" y="672.3" font-family="'Liberation Sans',sans-serif" font-weight="bold" font-style="normal" font-size="37.8" textLength="36.3" lengthAdjust="spacingAndGlyphs" fill="#ff3838" stroke="#ff3838" stroke-width="1.89" stroke-linejoin="round" paint-order="stroke" >US</text>
<g transform="translate(755.2 672.7) scale(1 1.75)"><text x="0" y="0" font-family="'Liberation Sans',sans-serif" font-weight="bold" font-size="40.0" textLength="17.9" lengthAdjust="spacingAndGlyphs" fill="#ff3838" stroke="#ff3838" stroke-width="1.2" stroke-linejoin="round">S</text></g>
<path d="M758.4,670.8 V747.0 H770.1 V662.3" fill="none" stroke="#ff3838" stroke-width="6.0" stroke-linejoin="round"/>
<path d="M 914.4,627.4 C 903.4,615.2 888.7,611.0 876.5,612.2 C 852.0,614.7 838.6,636.7 838.6,668.5 C 838.6,702.7 859.4,737.0 878.9,766.3 C 891.2,783.5 903.4,798.1 909.5,806.0 Q 914.4,810.8 919.3,806.0 C 927.8,795.7 940.1,781.0 952.3,766.3 C 974.3,737.0 990.2,702.7 990.2,668.5 C 990.2,636.7 976.8,614.7 952.3,612.2 C 937.6,611.0 925.4,615.9 914.4,627.4 Z" fill="#dfd8fd"/>
<path d="M 914.4,647.0 C 903.4,631.8 891.2,624.5 876.5,624.5 C 856.9,625.7 847.1,644.0 847.1,670.9 C 847.1,702.7 866.7,737.0 883.8,761.4 C 893.6,776.1 905.8,788.3 914.4,796.2 C 922.9,788.3 935.2,776.1 945.0,761.4 C 962.1,737.0 981.7,702.7 981.7,670.9 C 981.7,644.0 971.9,625.7 952.3,624.5 C 937.6,624.5 925.4,631.8 914.4,647.0 Z" fill="#30786f"/>
<clipPath id="hclip"><path d="M 914.4,627.4 C 903.4,615.2 888.7,611.0 876.5,612.2 C 852.0,614.7 838.6,636.7 838.6,668.5 C 838.6,702.7 859.4,737.0 878.9,766.3 C 891.2,783.5 903.4,798.1 909.5,806.0 Q 914.4,810.8 919.3,806.0 C 927.8,795.7 940.1,781.0 952.3,766.3 C 974.3,737.0 990.2,702.7 990.2,668.5 C 990.2,636.7 976.8,614.7 952.3,612.2 C 937.6,611.0 925.4,615.9 914.4,627.4 Z"/></clipPath>
<rect x="937.6" y="661.2" width="12.2" height="127.2" rx="2.9" fill="#dfd8fd" clip-path="url(#hclip)"/>
<rect x="924.2" y="683.2" width="39.1" height="14.7" rx="2.4" fill="#dfd8fd"/>
<text x="866.7" y="680.7" font-family="'Liberation Serif',serif" font-weight="normal" font-style="italic" font-size="36.7" textLength="65.6" lengthAdjust="spacingAndGlyphs" fill="#dfd8fd" >Jesus</text>
<path d="M 882.6,662.4 C 885.0,644.0 881.4,631.8 875.3,635.5 C 866.7,641.6 864.2,663.6 870.4,673.4 M 882.6,662.4 C 878.9,680.7 871.6,695.4 864.2,697.8 C 861.8,696.6 864.2,690.5 869.1,685.6" fill="none" stroke="#dfd8fd" stroke-width="1.1"/>
<text x="877.7" y="705.7" font-family="'Liberation Serif',serif" font-weight="normal" font-style="italic" font-size="29.4" textLength="33.0" lengthAdjust="spacingAndGlyphs" fill="#dfd8fd" >you</text>
<text x="885.0" y="733.3" font-family="'Liberation Serif',serif" font-weight="normal" font-style="italic" font-size="25.7" textLength="42.8" lengthAdjust="spacingAndGlyphs" fill="#dfd8fd" >are all</text>
<text x="878.9" y="761.4" font-family="'Liberation Serif',serif" font-weight="normal" font-style="italic" font-size="31.8" textLength="55.8" lengthAdjust="spacingAndGlyphs" fill="#dfd8fd" stroke="#dfd8fd" stroke-width="0.49" stroke-linejoin="round" paint-order="stroke" >i need</text>
<path d="M1012.2,639.1C1013.1,633.5 1014.1,631.3 1016.7,628.4C1019.2,625.6 1023.2,622.8 1027.3,622.2C1031.5,621.6 1036.2,624.1 1041.6,624.9C1046.9,625.6 1055.2,627.6 1059.3,626.7C1063.5,625.8 1063.2,621.3 1066.4,619.6C1069.7,617.8 1075.3,617.0 1078.9,616.0C1082.4,615.0 1084.5,613.0 1087.8,613.3C1091.0,613.6 1095.5,616.0 1098.4,617.8C1101.4,619.6 1102.3,621.9 1105.6,624.0C1108.8,626.1 1115.0,627.4 1118.0,630.2C1121.0,633.0 1122.7,637.0 1123.3,640.9C1123.9,644.7 1122.4,650.1 1121.6,653.3C1120.7,656.6 1117.1,658.1 1118.0,660.4C1118.9,662.8 1124.5,664.3 1126.9,667.6C1129.3,670.8 1131.0,674.7 1132.2,680.0C1133.4,685.3 1134.3,693.9 1134.0,699.6C1133.7,705.2 1131.6,709.0 1130.4,713.8C1129.3,718.5 1129.0,723.6 1126.9,728.0C1124.8,732.4 1121.9,737.5 1118.0,740.4C1114.1,743.4 1108.5,744.7 1103.8,745.8C1099.0,746.8 1093.7,747.6 1089.6,746.7C1085.4,745.8 1082.7,740.6 1078.9,740.4C1075.0,740.3 1071.2,745.5 1066.4,745.8C1061.7,746.1 1055.8,742.4 1050.4,742.2C1045.1,742.1 1040.1,744.6 1034.4,744.9C1028.8,745.2 1021.4,745.3 1016.7,744.0C1011.9,742.7 1008.7,740.1 1006.0,736.9C1003.3,733.6 1001.7,730.7 1000.7,724.4C999.6,718.2 999.5,705.8 999.8,699.6C1000.1,693.3 1000.8,690.2 1002.4,687.1C1004.1,684.0 1008.1,685.0 1009.6,680.9C1011.0,676.7 1010.9,669.2 1011.3,662.2C1011.8,655.3 1011.3,644.7 1012.2,639.1Z" fill="#06561d" />
<text x="1024.1" y="662.6" font-family="'Liberation Serif',serif" font-weight="normal" font-style="italic" font-size="43.6" textLength="86.8" lengthAdjust="spacingAndGlyphs" fill="#cf6fdd" stroke="#cf6fdd" stroke-width="0.71" stroke-linejoin="round" paint-order="stroke" transform="rotate(-8 1067.5 662.6)" >saved by</text>
<text x="1013.5" y="729.4" font-family="'Liberation Sans',sans-serif" font-weight="normal" font-style="normal" font-size="71.1" textLength="107.2" lengthAdjust="spacingAndGlyphs" fill="none" stroke="#cf6fdd" stroke-width="5.33" stroke-linejoin="round" paint-order="stroke" >JESUS</text>
<text x="1013.5" y="729.4" font-family="'Liberation Sans',sans-serif" font-weight="normal" font-style="normal" font-size="71.1" textLength="107.2" lengthAdjust="spacingAndGlyphs" fill="none" stroke="#06561d" stroke-width="0.89" stroke-linejoin="round" paint-order="stroke" >JESUS</text>
</svg>
</body>
</html>
